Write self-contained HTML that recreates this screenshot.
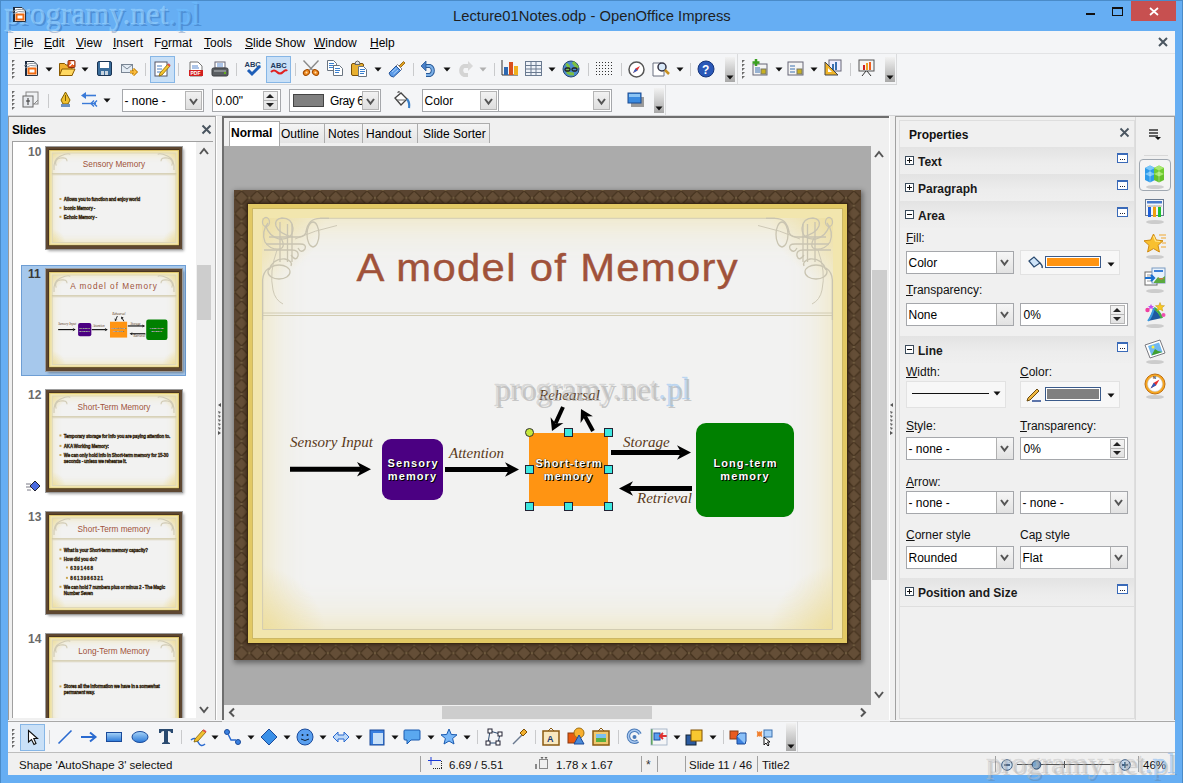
<!DOCTYPE html>
<html><head><meta charset="utf-8"><style>*{box-sizing:border-box;margin:0;padding:0}
html,body{width:1183px;height:783px;overflow:hidden;background:#66AEF3;font-family:"Liberation Sans",sans-serif;font-size:12px;color:#000;position:relative}
.a{position:absolute}
svg.a{overflow:visible}
.t{position:absolute;white-space:nowrap;line-height:1}
u{text-decoration:underline;text-underline-offset:1px}
</style></head><body>
<div class="a" style="left:0px;top:0px;width:1183px;height:783px;background:#66AEF3;border:1px solid #4A8BC8;border-bottom:none"></div>
<div class="t" style="left:453px;top:9px;font-size:14.8px;color:#1F1F1F">Lecture01Notes.odp - OpenOffice Impress</div>
<div class="a" style="left:1086px;top:13px;width:9px;height:2px;background:#111"></div>
<div class="a" style="left:1112px;top:7px;width:11px;height:9px;border:1px solid #111;border-top:2px solid #111"></div>
<div class="a" style="left:1131px;top:1px;width:45px;height:20px;background:#C75050"></div>
<svg class="a" style="left:1146px;top:5px" width="14" height="12" viewBox="0 0 14 12"><path d="M4 3L12 10M12 3L4 10" stroke="#fff" stroke-width="1.7"/></svg>
<div class="a" style="left:8px;top:31px;width:1167px;height:744px;background:#F4F5F7"></div>
<div class="t" style="left:14px;top:37px;font-size:12px;color:#000"><u>F</u>ile</div>
<div class="t" style="left:44px;top:37px;font-size:12px;color:#000"><u>E</u>dit</div>
<div class="t" style="left:76px;top:37px;font-size:12px;color:#000"><u>V</u>iew</div>
<div class="t" style="left:113px;top:37px;font-size:12px;color:#000"><u>I</u>nsert</div>
<div class="t" style="left:154px;top:37px;font-size:12px;color:#000">F<u>o</u>rmat</div>
<div class="t" style="left:204px;top:37px;font-size:12px;color:#000"><u>T</u>ools</div>
<div class="t" style="left:245px;top:37px;font-size:12px;color:#000"><u>S</u>lide Show</div>
<div class="t" style="left:314px;top:37px;font-size:12px;color:#000"><u>W</u>indow</div>
<div class="t" style="left:370px;top:37px;font-size:12px;color:#000"><u>H</u>elp</div>
<div class="a" style="left:8px;top:53px;width:1167px;height:1px;background:#E2E3E5"></div>
<svg class="a" style="left:1157px;top:36px" width="12" height="12" viewBox="0 0 12 12"><path d="M2 2L10 10M10 2L2 10" stroke="#4A5560" stroke-width="2"/></svg>
<div class="a" style="left:8px;top:84px;width:889px;height:1px;background:#D5D6D8"></div>
<div class="a" style="left:737px;top:54px;width:1px;height:30px;background:#DADBDD"></div>
<div class="a" style="left:896px;top:54px;width:1px;height:30px;background:#DADBDD"></div>
<svg class="a" style="left:12px;top:60px" width="4" height="20" viewBox="0 0 4 20"><path d="M0 0H3L0 3Z" fill="#6A6A6A"/><path d="M0 4H3L0 7Z" fill="#6A6A6A"/><path d="M0 8H3L0 11Z" fill="#6A6A6A"/><path d="M0 12H3L0 15Z" fill="#6A6A6A"/><path d="M0 16H3L0 19Z" fill="#6A6A6A"/></svg>
<svg class="a" style="left:24px;top:60px" width="15" height="17" viewBox="0 0 15 17"><path d="M1.5 1.5H10L13.5 5V15.5H1.5Z" fill="#fff" stroke="#2A3340"/><rect x="1" y="1" width="2" height="15" fill="#1A2A40"/><rect x="4.5" y="8.5" width="7" height="5" fill="#fff" stroke="#F06A10" stroke-width="2"/><path d="M0 6Q5 2 13 4M1 8Q6 4 13 6" stroke="#8A949E" fill="none" stroke-width="1"/></svg>
<svg class="a" style="left:45px;top:67px" width="8" height="5" viewBox="0 0 8 5"><path d="M0.5 0.5H7.5L4 4.5Z" fill="#111"/></svg>
<svg class="a" style="left:59px;top:60px" width="17" height="17" viewBox="0 0 17 17"><path d="M0.5 3.5H5.5L7 5H13V15.5H0.5Z" fill="#F0B030" stroke="#8A5A00"/><path d="M0.5 15.5L3 9H16L13 15.5Z" fill="#FFD860" stroke="#8A5A00"/><rect x="9" y="0.5" width="7" height="7" rx="1" fill="#E85A18" stroke="#8A3010"/><path d="M10.5 6L14.5 2M11.5 2H14.5V5" stroke="#fff" stroke-width="1.3" fill="none"/></svg>
<svg class="a" style="left:81px;top:67px" width="8" height="5" viewBox="0 0 8 5"><path d="M0.5 0.5H7.5L4 4.5Z" fill="#111"/></svg>
<svg class="a" style="left:97px;top:61px" width="15" height="15" viewBox="0 0 15 15"><rect x="0.5" y="0.5" width="14" height="14" rx="1.5" fill="#3A6C9A" stroke="#1A3454"/><rect x="3" y="1" width="9" height="6" fill="#FFFFFF"/><rect x="4" y="10" width="3" height="4" fill="#C8D4E0"/><rect x="8" y="10" width="3" height="4" fill="#C8D4E0"/></svg>
<svg class="a" style="left:120px;top:63px" width="18" height="13" viewBox="0 0 18 13"><rect x="1.5" y="1.5" width="11" height="8" fill="#E4ECF4" stroke="#7A8694"/><path d="M1.5 1.5L7 6L12.5 1.5" stroke="#7A8694" fill="none"/><path d="M10 9H15M13 6L16 9L13 12" stroke="#B87800" stroke-width="3" fill="none"/><path d="M10 9H15M13 6L16 9L13 12" stroke="#FFC040" stroke-width="1.4" fill="none"/></svg>
<div class="a" style="left:145px;top:63px;width:1px;height:13px;background:#C9CACC"></div>
<div class="a" style="left:150px;top:56px;width:25px;height:27px;background:#C9E0F7;border:1px solid #86B6E6"></div>
<svg class="a" style="left:154px;top:61px" width="17" height="16" viewBox="0 0 17 16"><rect x="1" y="1" width="12" height="14" fill="#fff" stroke="#556"/><path d="M3 5H8M3 8H8M3 11H7" stroke="#4A7FC0"/><path d="M6 12L14 3L16 5L8 14L5 15Z" fill="#F4C430" stroke="#8A6A00" stroke-width="0.8"/><path d="M14 3L16 5" stroke="#E05050" stroke-width="2"/></svg>
<div class="a" style="left:178px;top:63px;width:1px;height:13px;background:#C9CACC"></div>
<svg class="a" style="left:189px;top:61px" width="14" height="16" viewBox="0 0 14 16"><path d="M1 1H9L13 5V15H1Z" fill="#fff" stroke="#777"/><path d="M3 5H9M3 7H10" stroke="#5A8AD0"/><rect x="0" y="9" width="14" height="6" fill="#D21F1F"/><text x="1.5" y="14" font-size="5" font-family="Liberation Sans" font-weight="bold" fill="#fff">PDF</text></svg>
<svg class="a" style="left:211px;top:61px" width="18" height="16" viewBox="0 0 18 16"><rect x="4" y="1" width="10" height="6" fill="#fff" stroke="#667"/><path d="M6 3H12M6 5H12" stroke="#5A8AD0"/><rect x="1" y="7" width="16" height="8" rx="1.5" fill="#5A5E62" stroke="#3A3D40"/><rect x="3" y="9" width="12" height="2" fill="#8A8E92"/><circle cx="14" cy="12" r="1" fill="#6C0"/></svg>
<div class="a" style="left:236px;top:63px;width:1px;height:13px;background:#C9CACC"></div>
<svg class="a" style="left:244px;top:59px" width="18" height="18" viewBox="0 0 18 18"><text x="0.5" y="7.5" font-size="7.5" font-family="Liberation Sans" font-weight="bold" fill="#223A5E">ABC</text><path d="M4 11L8 15L16 7" stroke="#1E5EB8" stroke-width="3" fill="none"/></svg>
<div class="a" style="left:266px;top:56px;width:25px;height:27px;background:#C9E0F7;border:1px solid #86B6E6"></div>
<svg class="a" style="left:270px;top:60px" width="18" height="16" viewBox="0 0 18 16"><text x="0.5" y="8" font-size="7.5" font-family="Liberation Sans" font-weight="bold" fill="#223A5E">ABC</text><path d="M1 12Q4 9 7 12T13 12T17 11" stroke="#E02020" stroke-width="2" fill="none"/></svg>
<div class="a" style="left:295px;top:63px;width:1px;height:13px;background:#C9CACC"></div>
<svg class="a" style="left:302px;top:60px" width="18" height="17" viewBox="0 0 18 17"><path d="M1.5 0.5L10.5 10M16.5 0.5L7.5 10" stroke="#8A8A8A" stroke-width="1.4"/><ellipse cx="4.5" cy="12.5" rx="3.3" ry="2.6" transform="rotate(-35 4.5 12.5)" fill="#F08A20" stroke="#A04A00"/><ellipse cx="13.5" cy="12.5" rx="3.3" ry="2.6" transform="rotate(35 13.5 12.5)" fill="#F08A20" stroke="#A04A00"/><circle cx="4.5" cy="12.5" r="1" fill="#FFE0B0"/><circle cx="13.5" cy="12.5" r="1" fill="#FFE0B0"/></svg>
<svg class="a" style="left:327px;top:60px" width="17" height="16" viewBox="0 0 17 16"><path d="M0.5 0.5H6.5L9.5 3.5V10.5H0.5Z" fill="#fff" stroke="#6A7480"/><path d="M2 3.5H7M2 5.5H7M2 7.5H6" stroke="#3A80D0" stroke-width="1"/><path d="M6.5 5.5H12.5L15.5 8.5V15.5H6.5Z" fill="#fff" stroke="#6A7480"/><path d="M8 8.5H13M8 10.5H13M8 12.5H12" stroke="#3A80D0" stroke-width="1"/></svg>
<svg class="a" style="left:351px;top:60px" width="17" height="17" viewBox="0 0 17 17"><rect x="0.5" y="3.5" width="12" height="12" rx="1.5" fill="#E8B030" stroke="#7A5008"/><path d="M4 4.5Q4 1 6.5 1Q9 1 9 4.5Z" fill="#E0E0E0" stroke="#666"/><path d="M7.5 6.5H12.5L15.5 9.5V16.5H7.5Z" fill="#fff" stroke="#6A7480"/><path d="M9 9.5H14M9 11.5H14M9 13.5H13" stroke="#3A80D0" stroke-width="1"/></svg>
<svg class="a" style="left:374px;top:67px" width="8" height="5" viewBox="0 0 8 5"><path d="M0.5 0.5H7.5L4 4.5Z" fill="#111"/></svg>
<svg class="a" style="left:388px;top:60px" width="18" height="17" viewBox="0 0 18 17"><path d="M11 6L15.5 1.5L17 3L12.5 7.5Z" fill="#E0A020" stroke="#8A5A00" stroke-width="0.8"/><path d="M9.5 4.5L14 9L12.5 10.5L8 6Z" fill="#fff" stroke="#667" stroke-width="0.8"/><path d="M1 13L8 6L12.5 10.5L5.5 17Q2 17 1 13Z" fill="#5A9AE8" stroke="#1A4A90" stroke-width="0.9"/><path d="M4 12L8.5 8M5.5 14L10 10" stroke="#B8D8F8" stroke-width="0.9"/></svg>
<div class="a" style="left:413px;top:63px;width:1px;height:13px;background:#C9CACC"></div>
<svg class="a" style="left:420px;top:60px" width="18" height="17" viewBox="0 0 18 17"><path d="M4 6H10A5 5 0 0 1 10 15H6" fill="none" stroke="#2A5A98" stroke-width="4"/><path d="M4 6H10A5 5 0 0 1 10 15H6" fill="none" stroke="#7BB0E8" stroke-width="2"/><path d="M1 6L6 1V11Z" fill="#4A80C8" stroke="#2A5A98" stroke-width="0.8"/></svg>
<svg class="a" style="left:443px;top:67px" width="8" height="5" viewBox="0 0 8 5"><path d="M0.5 0.5H7.5L4 4.5Z" fill="#111"/></svg>
<svg class="a" style="left:456px;top:60px" width="18" height="17" viewBox="0 0 18 17"><path d="M14 6H8A5 5 0 0 0 8 15H12" fill="none" stroke="#D4D4D4" stroke-width="4"/><path d="M17 6L12 1V11Z" fill="#D8D8D8"/></svg>
<svg class="a" style="left:479px;top:67px" width="8" height="5" viewBox="0 0 8 5"><path d="M0.5 0.5H7.5L4 4.5Z" fill="#B0B0B0"/></svg>
<div class="a" style="left:494px;top:63px;width:1px;height:13px;background:#C9CACC"></div>
<svg class="a" style="left:501px;top:59px" width="18" height="18" viewBox="0 0 18 18"><path d="M1 1V16H17" stroke="#333" fill="none"/><rect x="3" y="8" width="4" height="8" fill="#2E68B0"/><rect x="8" y="3" width="4" height="13" fill="#D9501E"/><rect x="13" y="7" width="4" height="9" fill="#F0B020"/></svg>
<svg class="a" style="left:525px;top:61px" width="18" height="15" viewBox="0 0 18 15"><rect x="0.5" y="0.5" width="16" height="14" fill="#EEF2F8" stroke="#6A7A90"/><path d="M0.5 4.5H16.5M0.5 8H16.5M0.5 11.5H16.5M6 0.5V14.5M11 0.5V14.5" stroke="#6A7A90"/></svg>
<svg class="a" style="left:548px;top:67px" width="8" height="5" viewBox="0 0 8 5"><path d="M0.5 0.5H7.5L4 4.5Z" fill="#111"/></svg>
<svg class="a" style="left:562px;top:60px" width="18" height="18" viewBox="0 0 18 18"><circle cx="9" cy="9" r="8" fill="#4A8AD0" stroke="#2A4A70"/><path d="M4 4Q8 6 6 10T12 14M11 2Q14 6 16 8" stroke="#7CC040" stroke-width="3" fill="none"/><rect x="3" y="8" width="5" height="3" rx="1.5" fill="none" stroke="#222" stroke-width="1.3"/><rect x="10" y="8" width="5" height="3" rx="1.5" fill="none" stroke="#222" stroke-width="1.3"/></svg>
<div class="a" style="left:588px;top:63px;width:1px;height:13px;background:#C9CACC"></div>
<svg class="a" style="left:596px;top:62px" width="17" height="14" viewBox="0 0 17 14"><rect x="0" y="0" width="1" height="1" fill="#333"/><rect x="0" y="3" width="1" height="1" fill="#333"/><rect x="0" y="6" width="1" height="1" fill="#333"/><rect x="0" y="9" width="1" height="1" fill="#333"/><rect x="0" y="12" width="1" height="1" fill="#333"/><rect x="3" y="0" width="1" height="1" fill="#333"/><rect x="3" y="3" width="1" height="1" fill="#333"/><rect x="3" y="6" width="1" height="1" fill="#333"/><rect x="3" y="9" width="1" height="1" fill="#333"/><rect x="3" y="12" width="1" height="1" fill="#333"/><rect x="6" y="0" width="1" height="1" fill="#333"/><rect x="6" y="3" width="1" height="1" fill="#333"/><rect x="6" y="6" width="1" height="1" fill="#333"/><rect x="6" y="9" width="1" height="1" fill="#333"/><rect x="6" y="12" width="1" height="1" fill="#333"/><rect x="9" y="0" width="1" height="1" fill="#333"/><rect x="9" y="3" width="1" height="1" fill="#333"/><rect x="9" y="6" width="1" height="1" fill="#333"/><rect x="9" y="9" width="1" height="1" fill="#333"/><rect x="9" y="12" width="1" height="1" fill="#333"/><rect x="12" y="0" width="1" height="1" fill="#333"/><rect x="12" y="3" width="1" height="1" fill="#333"/><rect x="12" y="6" width="1" height="1" fill="#333"/><rect x="12" y="9" width="1" height="1" fill="#333"/><rect x="12" y="12" width="1" height="1" fill="#333"/><rect x="15" y="0" width="1" height="1" fill="#333"/><rect x="15" y="3" width="1" height="1" fill="#333"/><rect x="15" y="6" width="1" height="1" fill="#333"/><rect x="15" y="9" width="1" height="1" fill="#333"/><rect x="15" y="12" width="1" height="1" fill="#333"/></svg>
<div class="a" style="left:621px;top:63px;width:1px;height:13px;background:#C9CACC"></div>
<svg class="a" style="left:628px;top:61px" width="17" height="17" viewBox="0 0 17 17"><circle cx="8.5" cy="8.5" r="7.5" fill="#fff" stroke="#555" stroke-width="1.5"/><path d="M12 5L9.5 9.5L5 12L7.5 7.5Z" fill="#E03030"/><path d="M5 12L7.5 7.5L9.5 9.5Z" fill="#3060C0"/></svg>
<svg class="a" style="left:652px;top:60px" width="18" height="18" viewBox="0 0 18 18"><path d="M1 3H9L12 6V16H1Z" fill="#fff" stroke="#6A7080"/><circle cx="10" cy="7" r="4" fill="#D8E8F8" stroke="#334" stroke-width="1.5"/><path d="M13 10L17 14" stroke="#C89020" stroke-width="2.5"/></svg>
<svg class="a" style="left:676px;top:67px" width="8" height="5" viewBox="0 0 8 5"><path d="M0.5 0.5H7.5L4 4.5Z" fill="#111"/></svg>
<div class="a" style="left:690px;top:63px;width:1px;height:13px;background:#C9CACC"></div>
<svg class="a" style="left:697px;top:60px" width="18" height="18" viewBox="0 0 18 18"><circle cx="9" cy="9" r="8" fill="#2A58B8" stroke="#16357A"/><text x="5" y="14" font-size="12" font-weight="bold" font-family="Liberation Sans" fill="#fff">?</text></svg>
<div class="a" style="left:725px;top:57px;width:10px;height:25px;background:linear-gradient(#F2F2F2,#A8A8A8)"></div>
<svg class="a" style="left:726px;top:75px" width="8" height="5" viewBox="0 0 8 5"><path d="M0.5 0.5H7.5L4 4.5Z" fill="#111"/></svg>
<svg class="a" style="left:742px;top:60px" width="4" height="20" viewBox="0 0 4 20"><path d="M0 0H3L0 3Z" fill="#6A6A6A"/><path d="M0 4H3L0 7Z" fill="#6A6A6A"/><path d="M0 8H3L0 11Z" fill="#6A6A6A"/><path d="M0 12H3L0 15Z" fill="#6A6A6A"/><path d="M0 16H3L0 19Z" fill="#6A6A6A"/></svg>
<svg class="a" style="left:751px;top:59px" width="18" height="18" viewBox="0 0 18 18"><rect x="2" y="5" width="14" height="11" fill="#F4F4F4" stroke="#667"/><path d="M4 9H9M4 11H9M4 13H9" stroke="#3A70B0"/><rect x="10" y="10" width="5" height="5" fill="#C8B020" stroke="#776"/><path d="M5 0V7M1.5 3.5H8.5" stroke="#3AA020" stroke-width="2.5"/></svg>
<svg class="a" style="left:775px;top:67px" width="8" height="5" viewBox="0 0 8 5"><path d="M0.5 0.5H7.5L4 4.5Z" fill="#111"/></svg>
<svg class="a" style="left:787px;top:61px" width="18" height="16" viewBox="0 0 18 16"><rect x="1" y="1" width="15" height="13" fill="#F4F4F4" stroke="#667"/><path d="M3 5H8M3 8H8M3 11H8" stroke="#3A70B0"/><rect x="10" y="8" width="5" height="5" fill="#C8B020" stroke="#776"/></svg>
<svg class="a" style="left:810px;top:67px" width="8" height="5" viewBox="0 0 8 5"><path d="M0.5 0.5H7.5L4 4.5Z" fill="#111"/></svg>
<svg class="a" style="left:824px;top:59px" width="18" height="18" viewBox="0 0 18 18"><rect x="5" y="1" width="12" height="11" fill="#EEF" stroke="#667"/><rect x="8" y="5" width="2" height="6" fill="#3A70B0"/><rect x="11" y="3" width="2" height="8" fill="#3A70B0"/><path d="M1 16L1 3L14 16Z" fill="#F0B428" stroke="#444"/><path d="M4 13L4 9L8 13Z" fill="#fff"/></svg>
<div class="a" style="left:850px;top:63px;width:1px;height:13px;background:#C9CACC"></div>
<svg class="a" style="left:858px;top:59px" width="17" height="18" viewBox="0 0 17 18"><rect x="1" y="1" width="15" height="11" fill="#F4F4F4" stroke="#555"/><rect x="5" y="6" width="2" height="5" fill="#D02020"/><rect x="8" y="4" width="2" height="7" fill="#F0A020"/><rect x="11" y="3" width="2" height="8" fill="#F06020"/><path d="M8 12L4 17M9 12L13 17" stroke="#333"/></svg>
<div class="a" style="left:885px;top:57px;width:10px;height:25px;background:linear-gradient(#F2F2F2,#A8A8A8)"></div>
<svg class="a" style="left:886px;top:75px" width="8" height="5" viewBox="0 0 8 5"><path d="M0.5 0.5H7.5L4 4.5Z" fill="#111"/></svg>
<div class="a" style="left:8px;top:115px;width:1167px;height:1px;background:#D5D6D8"></div>
<div class="a" style="left:665px;top:85px;width:1px;height:30px;background:#DADBDD"></div>
<svg class="a" style="left:12px;top:91px" width="4" height="20" viewBox="0 0 4 20"><path d="M0 0H3L0 3Z" fill="#6A6A6A"/><path d="M0 4H3L0 7Z" fill="#6A6A6A"/><path d="M0 8H3L0 11Z" fill="#6A6A6A"/><path d="M0 12H3L0 15Z" fill="#6A6A6A"/><path d="M0 16H3L0 19Z" fill="#6A6A6A"/></svg>
<svg class="a" style="left:22px;top:91px" width="17" height="17" viewBox="0 0 17 17"><rect x="4" y="1" width="12" height="12" fill="#F0F2F4" stroke="#888"/><rect x="1" y="5" width="10" height="11" fill="#E8EAEE" stroke="#666"/><path d="M6 7V14M4 10H8" stroke="#333"/><path d="M12 13L16 9" stroke="#888"/></svg>
<div class="a" style="left:48px;top:94px;width:1px;height:14px;background:#C9CACC"></div>
<svg class="a" style="left:59px;top:91px" width="13" height="17" viewBox="0 0 13 17"><path d="M6.5 1L11 9L9 13H4L2 9Z" fill="#F0C030" stroke="#806000"/><path d="M6.5 4V10" stroke="#806000"/><rect x="2" y="13" width="9" height="3" fill="#6A90C0"/></svg>
<svg class="a" style="left:80px;top:92px" width="18" height="15" viewBox="0 0 18 15"><path d="M4 3.5H16" stroke="#3A7AD8" stroke-width="1.6"/><path d="M1 3.5L6 0V7Z" fill="#3A7AD8"/><path d="M2 11.5H16" stroke="#3A7AD8" stroke-width="1.4"/><path d="M14 8.5L11 11.5L14 14.5M17 8.5L14 11.5L17 14.5" stroke="#3A7AD8" stroke-width="1.4" fill="none"/></svg>
<svg class="a" style="left:103px;top:98px" width="8" height="5" viewBox="0 0 8 5"><path d="M0.5 0.5H7.5L4 4.5Z" fill="#111"/></svg>
<div class="a" style="left:122px;top:89px;width:82px;height:23px;background:#fff;border:1px solid #A5A7AB"></div>
<div class="t" style="left:124.5px;top:95px;font-size:12px;">- none -</div>
<div class="a" style="left:185px;top:91px;width:17px;height:19px;background:linear-gradient(#F2F2F2,#DEDEDE);border:1px solid #B5B5B5"></div>
<svg class="a" style="left:188.5px;top:97.5px" width="9" height="6.5" viewBox="0 0 9 6.5"><path d="M1 1L4.5 5.5L8 1" fill="none" stroke="#555" stroke-width="2"/></svg>
<div class="a" style="left:212px;top:89px;width:69px;height:23px;background:#fff;border:1px solid #A5A7AB"></div>
<div class="a" style="left:263px;top:91px;width:15px;height:19px;background:linear-gradient(#F4F4F4,#E2E2E2);border:1px solid #B5B5B5"></div>
<div class="a" style="left:264px;top:100px;width:13px;height:1px;background:#B5B5B5"></div>
<svg class="a" style="left:266px;top:94px" width="8" height="4" viewBox="0 0 8 4"><path d="M0 4L4 0L8 4Z" fill="#222"/></svg>
<svg class="a" style="left:266px;top:103px" width="8" height="4" viewBox="0 0 8 4"><path d="M0 0L8 0L4 4Z" fill="#222"/></svg>
<div class="t" style="left:215.5px;top:95px;font-size:12px">0.00&quot;</div>
<div class="a" style="left:289px;top:89px;width:92px;height:23px;background:#fff;border:1px solid #A5A7AB"></div>
<div class="a" style="left:293px;top:94px;width:31px;height:13px;background:#808080;border:1px solid #444"></div>
<div class="t" style="left:330px;top:95px;font-size:12px;letter-spacing:-0.4px">Gray 6</div>
<div class="a" style="left:362px;top:91px;width:17px;height:19px;background:linear-gradient(#F2F2F2,#DEDEDE);border:1px solid #B5B5B5"></div>
<svg class="a" style="left:365.5px;top:97.5px" width="9" height="6.5" viewBox="0 0 9 6.5"><path d="M1 1L4.5 5.5L8 1" fill="none" stroke="#555" stroke-width="2"/></svg>
<svg class="a" style="left:392px;top:91px" width="18" height="18" viewBox="0 0 18 18"><path d="M3 7L9 2L15 8L9 14Z" fill="#fff" stroke="#444" stroke-width="1.3"/><path d="M5 9H13" stroke="#666"/><path d="M15 8Q18 12 17 17" stroke="#3A80C8" stroke-width="2.2" fill="none"/><path d="M6 2Q5 0 8 1" stroke="#444" fill="none"/></svg>
<div class="a" style="left:422px;top:89px;width:77px;height:23px;background:#fff;border:1px solid #A5A7AB"></div>
<div class="t" style="left:424.5px;top:95px;font-size:12px;">Color</div>
<div class="a" style="left:480px;top:91px;width:17px;height:19px;background:linear-gradient(#F2F2F2,#DEDEDE);border:1px solid #B5B5B5"></div>
<svg class="a" style="left:483.5px;top:97.5px" width="9" height="6.5" viewBox="0 0 9 6.5"><path d="M1 1L4.5 5.5L8 1" fill="none" stroke="#555" stroke-width="2"/></svg>
<div class="a" style="left:498px;top:89px;width:114px;height:23px;background:#fff;border:1px solid #A5A7AB"></div>
<div class="a" style="left:593px;top:91px;width:17px;height:19px;background:linear-gradient(#F2F2F2,#DEDEDE);border:1px solid #B5B5B5"></div>
<svg class="a" style="left:596.5px;top:97.5px" width="9" height="6.5" viewBox="0 0 9 6.5"><path d="M1 1L4.5 5.5L8 1" fill="none" stroke="#555" stroke-width="2"/></svg>
<svg class="a" style="left:627px;top:92px" width="18" height="16" viewBox="0 0 18 16"><rect x="4" y="5" width="13" height="10" fill="#9A9A9A"/><rect x="1" y="1" width="13" height="10" fill="#3A8AE0" stroke="#1A4A90"/><rect x="2" y="2" width="11" height="3" fill="#8CC4F4"/></svg>
<div class="a" style="left:654px;top:88px;width:10px;height:25px;background:linear-gradient(#F2F2F2,#A8A8A8)"></div>
<svg class="a" style="left:655px;top:106px" width="8" height="5" viewBox="0 0 8 5"><path d="M0.5 0.5H7.5L4 4.5Z" fill="#111"/></svg>
<div class="a" style="left:8px;top:116px;width:208px;height:605px;background:#F0F0F0;border-left:1px solid #9A9A9A;border-top:1px solid #9A9A9A;border-right:1px solid #B0B0B0"></div>
<div class="t" style="left:12px;top:124px;font-size:12px;font-weight:bold;letter-spacing:-0.3px">Slides</div>
<svg class="a" style="left:201px;top:124px" width="11" height="11" viewBox="0 0 11 11"><path d="M1.5 1.5L9.5 9.5M9.5 1.5L1.5 9.5" stroke="#4A5560" stroke-width="2"/></svg>
<div class="a" style="left:12px;top:141px;width:201px;height:579px;background:#fff;border-top:1px solid #A0A0A0;border-left:1px solid #A0A0A0"></div>
<div class="a" style="left:196px;top:142px;width:17px;height:578px;background:#F0F0F0"></div>
<div class="a" style="left:197px;top:265px;width:14px;height:55px;background:#CDCDCD"></div>
<svg class="a" style="left:199px;top:148px" width="10" height="7" viewBox="0 0 10 7"><path d="M1 6L5.0 1L9 6" fill="none" stroke="#555" stroke-width="2"/></svg>
<svg class="a" style="left:199px;top:706px" width="10" height="7" viewBox="0 0 10 7"><path d="M1 1L5.0 6L9 1" fill="none" stroke="#555" stroke-width="2"/></svg>
<div class="a" style="left:21px;top:265px;width:165px;height:111px;background:#A6C8EC;border:1px solid #6E9ED4"></div>
<div class="t" style="left:28px;top:146px;font-size:12px;font-weight:bold;color:#6A6A6A">10</div>
<div class="t" style="left:28px;top:268px;font-size:12px;font-weight:bold;color:#3A3A3A">11</div>
<div class="t" style="left:28px;top:389px;font-size:12px;font-weight:bold;color:#6A6A6A">12</div>
<div class="t" style="left:28px;top:511px;font-size:12px;font-weight:bold;color:#6A6A6A">13</div>
<div class="t" style="left:28px;top:633px;font-size:12px;font-weight:bold;color:#6A6A6A">14</div>
<div class="a" style="left:46px;top:147px;width:627px;height:470px;transform:scale(0.21691,0.21702);transform-origin:0 0;box-shadow:0 0 0 4px #A8A8A8, 8px 8px 12px rgba(0,0,0,.35)">
<div class="a" style="left:0px;top:0px;width:627px;height:470px;background:#5E4731"></div>
<div class="a" style="left:14px;top:14px;width:599px;height:439px;background:#E2C964;box-shadow:0 0 0 1px #3A2814, 0 0 3px 2px rgba(35,22,10,.55)"></div>
<div class="a" style="left:18px;top:18px;width:591px;height:431px;background:radial-gradient(circle at 0 0,rgba(232,205,100,.6),rgba(232,205,100,0) 75px),radial-gradient(circle at 100% 0,rgba(232,205,100,.6),rgba(232,205,100,0) 75px),radial-gradient(circle at 0 100%,rgba(232,205,100,.6),rgba(232,205,100,0) 75px),radial-gradient(circle at 100% 100%,rgba(232,205,100,.6),rgba(232,205,100,0) 75px),#F2F2F1;box-shadow:inset 0 0 0 1px #CDB865, inset 0 0 0 10px #F2E6AE, inset 0 0 44px 6px rgba(238,222,150,.85)"></div>
<div class="a" style="left:27px;top:26px;width:574px;height:416px;border:4px solid #DCD6BC"></div>
<div class="a" style="left:27px;top:121px;width:574px;height:9px;border-top:4px solid #CFC7A6;border-bottom:4px solid #D8D1B5"></div>
<svg class="a" style="left:27px;top:26px" width="90" height="90" viewBox="0 0 90 90"><path d="M10 80Q5 30 40 15T85 8M20 60Q10 30 40 25T70 40" fill="none" stroke="#D0CAB4" stroke-width="5"/></svg>
<svg class="a" style="left:510px;top:26px" width="90" height="90"><g transform="translate(90,0) scale(-1,1)"><path d="M10 80Q5 30 40 15T85 8M20 60Q10 30 40 25T70 40" fill="none" stroke="#D0CAB4" stroke-width="5"/></g></svg>
<div class="t" style="left:0;width:627px;text-align:center;top:59px;font-size:38px;color:#A0523A;letter-spacing:0px">Sensory Memory</div>
<div class="a" style="left:62px;top:235px;width:9px;height:9px;background:#C9A44C"></div>
<div class="t" style="left:82px;top:227px;font-size:24px;font-weight:bold;color:#2E1C08;line-height:27px;letter-spacing:-1px;-webkit-text-stroke:1.4px #2E1C08;transform:scaleX(0.86);transform-origin:0 0">Allows you to function and enjoy world</div>
<div class="a" style="left:62px;top:276px;width:9px;height:9px;background:#C9A44C"></div>
<div class="t" style="left:82px;top:268px;font-size:24px;font-weight:bold;color:#2E1C08;line-height:27px;letter-spacing:-1px;-webkit-text-stroke:1.4px #2E1C08;transform:scaleX(0.86);transform-origin:0 0">Iconic Memory -</div>
<div class="a" style="left:62px;top:317px;width:9px;height:9px;background:#C9A44C"></div>
<div class="t" style="left:82px;top:309px;font-size:24px;font-weight:bold;color:#2E1C08;line-height:27px;letter-spacing:-1px;-webkit-text-stroke:1.4px #2E1C08;transform:scaleX(0.86);transform-origin:0 0">Echoic Memory -</div>
</div>
<div class="a" style="left:45px;top:146px;width:138px;height:104px;border:1px solid #9C9C9C"></div>
<div class="a" style="left:46px;top:269px;width:627px;height:470px;transform:scale(0.21691,0.21702);transform-origin:0 0;box-shadow:0 0 0 4px #A8A8A8, 8px 8px 12px rgba(0,0,0,.35)">
<div class="a" style="left:0px;top:0px;width:627px;height:470px;background:#5E4731"></div>
<div class="a" style="left:14px;top:14px;width:599px;height:439px;background:#E2C964;box-shadow:0 0 0 1px #3A2814, 0 0 3px 2px rgba(35,22,10,.55)"></div>
<div class="a" style="left:18px;top:18px;width:591px;height:431px;background:radial-gradient(circle at 0 0,rgba(232,205,100,.6),rgba(232,205,100,0) 75px),radial-gradient(circle at 100% 0,rgba(232,205,100,.6),rgba(232,205,100,0) 75px),radial-gradient(circle at 0 100%,rgba(232,205,100,.6),rgba(232,205,100,0) 75px),radial-gradient(circle at 100% 100%,rgba(232,205,100,.6),rgba(232,205,100,0) 75px),#F2F2F1;box-shadow:inset 0 0 0 1px #CDB865, inset 0 0 0 10px #F2E6AE, inset 0 0 44px 6px rgba(238,222,150,.85)"></div>
<div class="a" style="left:27px;top:26px;width:574px;height:416px;border:4px solid #DCD6BC"></div>
<div class="a" style="left:27px;top:121px;width:574px;height:9px;border-top:4px solid #CFC7A6;border-bottom:4px solid #D8D1B5"></div>
<svg class="a" style="left:27px;top:26px" width="90" height="90" viewBox="0 0 90 90"><path d="M10 80Q5 30 40 15T85 8M20 60Q10 30 40 25T70 40" fill="none" stroke="#D0CAB4" stroke-width="5"/></svg>
<svg class="a" style="left:510px;top:26px" width="90" height="90"><g transform="translate(90,0) scale(-1,1)"><path d="M10 80Q5 30 40 15T85 8M20 60Q10 30 40 25T70 40" fill="none" stroke="#D0CAB4" stroke-width="5"/></g></svg>
<div class="t" style="left:0;width:627px;text-align:center;top:59px;font-size:38px;color:#A0523A;letter-spacing:4.5px">A model of Memory</div>
<div class="t" style="left:56px;top:245px;font-family:'Liberation Serif',serif;font-style:italic;font-size:15px;color:#5A3A1A">Sensory Input</div>
<div class="t" style="left:215px;top:256px;font-family:'Liberation Serif',serif;font-style:italic;font-size:15px;color:#5A3A1A">Attention</div>
<div class="t" style="left:305px;top:198px;font-family:'Liberation Serif',serif;font-style:italic;font-size:15px;color:#5A3A1A">Rehearsal</div>
<div class="t" style="left:389px;top:245px;font-family:'Liberation Serif',serif;font-style:italic;font-size:15px;color:#5A3A1A">Storage</div>
<div class="t" style="left:403px;top:301px;font-family:'Liberation Serif',serif;font-style:italic;font-size:15px;color:#5A3A1A">Retrieval</div>
<svg class="a" style="left:-234px;top:-190px" width="1183" height="783"><line x1="290" y1="469.3" x2="361.2" y2="469.3" stroke="#000" stroke-width="5"/><polygon points="371.0,469.3 357.0,476.5 361.2,469.3 357.0,462.1" fill="#000"/><line x1="445" y1="469.5" x2="509.2" y2="469.5" stroke="#000" stroke-width="5"/><polygon points="519.0,469.5 505.0,476.7 509.2,469.5 505.0,462.3" fill="#000"/><line x1="611" y1="452.5" x2="681.2" y2="452.5" stroke="#000" stroke-width="5"/><polygon points="691.0,452.5 677.0,459.7 681.2,452.5 677.0,445.3" fill="#000"/><line x1="692" y1="488.5" x2="628.8" y2="488.5" stroke="#000" stroke-width="5"/><polygon points="619.0,488.5 633.0,481.3 628.8,488.5 633.0,495.7" fill="#000"/><line x1="563" y1="407" x2="555.5" y2="423.4" stroke="#000" stroke-width="4"/><polygon points="552.0,431.0 550.6,417.2 555.5,423.4 563.4,423.0" fill="#000"/><line x1="593" y1="431" x2="585.0" y2="416.4" stroke="#000" stroke-width="4"/><polygon points="581.0,409.0 592.9,416.2 585.0,416.4 580.6,422.9" fill="#000"/></svg>
<div class="a" style="left:148px;top:249px;width:61px;height:61px;background:#4B0082;border-radius:9px"></div>
<div class="t" style="left:148px;top:267px;width:61px;font-size:11px;font-weight:bold;color:#fff;letter-spacing:1.1px;text-indent:1.1px;text-align:center;line-height:13px;text-shadow:1px 1px 0 #000,0 0 1px #000">Sensory<br>memory</div>
<div class="a" style="left:295px;top:243px;width:79px;height:73px;background:#FF9412"></div>
<div class="t" style="left:295px;top:267px;width:79px;font-size:11px;font-weight:bold;color:#fff;letter-spacing:1.1px;text-indent:1.1px;text-align:center;line-height:13px;text-shadow:1px 1px 0 #000,0 0 1px #000">Short-term<br>memory</div>
<div class="a" style="left:462px;top:233px;width:98px;height:94px;background:#008000;border-radius:10px"></div>
<div class="t" style="left:462px;top:267px;width:98px;font-size:11px;font-weight:bold;color:#fff;letter-spacing:1.1px;text-indent:1.1px;text-align:center;line-height:13px;text-shadow:1px 1px 0 #000,0 0 1px #000">Long-term<br>memory</div>
</div>
<div class="a" style="left:45px;top:268px;width:138px;height:104px;border:1px solid #9C9C9C"></div>
<div class="a" style="left:46px;top:390px;width:627px;height:470px;transform:scale(0.21691,0.21702);transform-origin:0 0;box-shadow:0 0 0 4px #A8A8A8, 8px 8px 12px rgba(0,0,0,.35)">
<div class="a" style="left:0px;top:0px;width:627px;height:470px;background:#5E4731"></div>
<div class="a" style="left:14px;top:14px;width:599px;height:439px;background:#E2C964;box-shadow:0 0 0 1px #3A2814, 0 0 3px 2px rgba(35,22,10,.55)"></div>
<div class="a" style="left:18px;top:18px;width:591px;height:431px;background:radial-gradient(circle at 0 0,rgba(232,205,100,.6),rgba(232,205,100,0) 75px),radial-gradient(circle at 100% 0,rgba(232,205,100,.6),rgba(232,205,100,0) 75px),radial-gradient(circle at 0 100%,rgba(232,205,100,.6),rgba(232,205,100,0) 75px),radial-gradient(circle at 100% 100%,rgba(232,205,100,.6),rgba(232,205,100,0) 75px),#F2F2F1;box-shadow:inset 0 0 0 1px #CDB865, inset 0 0 0 10px #F2E6AE, inset 0 0 44px 6px rgba(238,222,150,.85)"></div>
<div class="a" style="left:27px;top:26px;width:574px;height:416px;border:4px solid #DCD6BC"></div>
<div class="a" style="left:27px;top:121px;width:574px;height:9px;border-top:4px solid #CFC7A6;border-bottom:4px solid #D8D1B5"></div>
<svg class="a" style="left:27px;top:26px" width="90" height="90" viewBox="0 0 90 90"><path d="M10 80Q5 30 40 15T85 8M20 60Q10 30 40 25T70 40" fill="none" stroke="#D0CAB4" stroke-width="5"/></svg>
<svg class="a" style="left:510px;top:26px" width="90" height="90"><g transform="translate(90,0) scale(-1,1)"><path d="M10 80Q5 30 40 15T85 8M20 60Q10 30 40 25T70 40" fill="none" stroke="#D0CAB4" stroke-width="5"/></g></svg>
<div class="t" style="left:0;width:627px;text-align:center;top:59px;font-size:38px;color:#A0523A;letter-spacing:0px">Short-Term Memory</div>
<div class="a" style="left:62px;top:205px;width:9px;height:9px;background:#C9A44C"></div>
<div class="t" style="left:82px;top:197px;font-size:24px;font-weight:bold;color:#2E1C08;line-height:27px;letter-spacing:-1px;-webkit-text-stroke:1.4px #2E1C08;transform:scaleX(0.86);transform-origin:0 0">Temporary storage for info you are paying attention to.</div>
<div class="a" style="left:62px;top:253px;width:9px;height:9px;background:#C9A44C"></div>
<div class="t" style="left:82px;top:245px;font-size:24px;font-weight:bold;color:#2E1C08;line-height:27px;letter-spacing:-1px;-webkit-text-stroke:1.4px #2E1C08;transform:scaleX(0.86);transform-origin:0 0">AKA Working Memory:</div>
<div class="a" style="left:62px;top:295px;width:9px;height:9px;background:#C9A44C"></div>
<div class="t" style="left:82px;top:287px;font-size:24px;font-weight:bold;color:#2E1C08;line-height:27px;letter-spacing:-1px;-webkit-text-stroke:1.4px #2E1C08;transform:scaleX(0.86);transform-origin:0 0">We can only hold info in Short-term memory for 15-30</div>
<div class="t" style="left:82px;top:314px;font-size:24px;font-weight:bold;color:#2E1C08;line-height:27px;letter-spacing:-1px;-webkit-text-stroke:1.4px #2E1C08;transform:scaleX(0.86);transform-origin:0 0">seconds - unless we rehearse it.</div>
</div>
<div class="a" style="left:45px;top:389px;width:138px;height:104px;border:1px solid #9C9C9C"></div>
<div class="a" style="left:46px;top:512px;width:627px;height:470px;transform:scale(0.21691,0.21702);transform-origin:0 0;box-shadow:0 0 0 4px #A8A8A8, 8px 8px 12px rgba(0,0,0,.35)">
<div class="a" style="left:0px;top:0px;width:627px;height:470px;background:#5E4731"></div>
<div class="a" style="left:14px;top:14px;width:599px;height:439px;background:#E2C964;box-shadow:0 0 0 1px #3A2814, 0 0 3px 2px rgba(35,22,10,.55)"></div>
<div class="a" style="left:18px;top:18px;width:591px;height:431px;background:radial-gradient(circle at 0 0,rgba(232,205,100,.6),rgba(232,205,100,0) 75px),radial-gradient(circle at 100% 0,rgba(232,205,100,.6),rgba(232,205,100,0) 75px),radial-gradient(circle at 0 100%,rgba(232,205,100,.6),rgba(232,205,100,0) 75px),radial-gradient(circle at 100% 100%,rgba(232,205,100,.6),rgba(232,205,100,0) 75px),#F2F2F1;box-shadow:inset 0 0 0 1px #CDB865, inset 0 0 0 10px #F2E6AE, inset 0 0 44px 6px rgba(238,222,150,.85)"></div>
<div class="a" style="left:27px;top:26px;width:574px;height:416px;border:4px solid #DCD6BC"></div>
<div class="a" style="left:27px;top:121px;width:574px;height:9px;border-top:4px solid #CFC7A6;border-bottom:4px solid #D8D1B5"></div>
<svg class="a" style="left:27px;top:26px" width="90" height="90" viewBox="0 0 90 90"><path d="M10 80Q5 30 40 15T85 8M20 60Q10 30 40 25T70 40" fill="none" stroke="#D0CAB4" stroke-width="5"/></svg>
<svg class="a" style="left:510px;top:26px" width="90" height="90"><g transform="translate(90,0) scale(-1,1)"><path d="M10 80Q5 30 40 15T85 8M20 60Q10 30 40 25T70 40" fill="none" stroke="#D0CAB4" stroke-width="5"/></g></svg>
<div class="t" style="left:0;width:627px;text-align:center;top:59px;font-size:38px;color:#A0523A;letter-spacing:0px">Short-Term memory</div>
<div class="a" style="left:62px;top:169px;width:9px;height:9px;background:#C9A44C"></div>
<div class="t" style="left:82px;top:161px;font-size:24px;font-weight:bold;color:#2E1C08;line-height:27px;letter-spacing:-1px;-webkit-text-stroke:1.4px #2E1C08;transform:scaleX(0.86);transform-origin:0 0">What is your Short-term memory capacity?</div>
<div class="a" style="left:62px;top:210px;width:9px;height:9px;background:#C9A44C"></div>
<div class="t" style="left:82px;top:202px;font-size:24px;font-weight:bold;color:#2E1C08;line-height:27px;letter-spacing:-1px;-webkit-text-stroke:1.4px #2E1C08;transform:scaleX(0.86);transform-origin:0 0">How did you do?</div>
<div class="a" style="left:92px;top:251px;width:9px;height:9px;background:#C9A44C"></div>
<div class="t" style="left:112px;top:243px;font-size:24px;font-weight:bold;color:#2E1C08;line-height:27px;letter-spacing:-1px;-webkit-text-stroke:1.4px #2E1C08;transform:scaleX(0.86);transform-origin:0 0">6 3 9 1 4 6 8</div>
<div class="a" style="left:92px;top:299px;width:9px;height:9px;background:#C9A44C"></div>
<div class="t" style="left:112px;top:291px;font-size:24px;font-weight:bold;color:#2E1C08;line-height:27px;letter-spacing:-1px;-webkit-text-stroke:1.4px #2E1C08;transform:scaleX(0.86);transform-origin:0 0">8 6 1 3 9 8 6 3 2 1</div>
<div class="a" style="left:62px;top:340px;width:9px;height:9px;background:#C9A44C"></div>
<div class="t" style="left:82px;top:332px;font-size:24px;font-weight:bold;color:#2E1C08;line-height:27px;letter-spacing:-1px;-webkit-text-stroke:1.4px #2E1C08;transform:scaleX(0.86);transform-origin:0 0">We can hold 7 numbers plus or minus 2 - The Magic</div>
<div class="t" style="left:82px;top:359px;font-size:24px;font-weight:bold;color:#2E1C08;line-height:27px;letter-spacing:-1px;-webkit-text-stroke:1.4px #2E1C08;transform:scaleX(0.86);transform-origin:0 0">Number Seven</div>
</div>
<div class="a" style="left:45px;top:511px;width:138px;height:104px;border:1px solid #9C9C9C"></div>
<div class="a" style="left:46px;top:634px;width:627px;height:470px;transform:scale(0.21691,0.21702);transform-origin:0 0;box-shadow:0 0 0 4px #A8A8A8, 8px 8px 12px rgba(0,0,0,.35)">
<div class="a" style="left:0px;top:0px;width:627px;height:470px;background:#5E4731"></div>
<div class="a" style="left:14px;top:14px;width:599px;height:439px;background:#E2C964;box-shadow:0 0 0 1px #3A2814, 0 0 3px 2px rgba(35,22,10,.55)"></div>
<div class="a" style="left:18px;top:18px;width:591px;height:431px;background:radial-gradient(circle at 0 0,rgba(232,205,100,.6),rgba(232,205,100,0) 75px),radial-gradient(circle at 100% 0,rgba(232,205,100,.6),rgba(232,205,100,0) 75px),radial-gradient(circle at 0 100%,rgba(232,205,100,.6),rgba(232,205,100,0) 75px),radial-gradient(circle at 100% 100%,rgba(232,205,100,.6),rgba(232,205,100,0) 75px),#F2F2F1;box-shadow:inset 0 0 0 1px #CDB865, inset 0 0 0 10px #F2E6AE, inset 0 0 44px 6px rgba(238,222,150,.85)"></div>
<div class="a" style="left:27px;top:26px;width:574px;height:416px;border:4px solid #DCD6BC"></div>
<div class="a" style="left:27px;top:121px;width:574px;height:9px;border-top:4px solid #CFC7A6;border-bottom:4px solid #D8D1B5"></div>
<svg class="a" style="left:27px;top:26px" width="90" height="90" viewBox="0 0 90 90"><path d="M10 80Q5 30 40 15T85 8M20 60Q10 30 40 25T70 40" fill="none" stroke="#D0CAB4" stroke-width="5"/></svg>
<svg class="a" style="left:510px;top:26px" width="90" height="90"><g transform="translate(90,0) scale(-1,1)"><path d="M10 80Q5 30 40 15T85 8M20 60Q10 30 40 25T70 40" fill="none" stroke="#D0CAB4" stroke-width="5"/></g></svg>
<div class="t" style="left:0;width:627px;text-align:center;top:59px;font-size:38px;color:#A0523A;letter-spacing:0px">Long-Term Memory</div>
<div class="a" style="left:62px;top:237px;width:9px;height:9px;background:#C9A44C"></div>
<div class="t" style="left:82px;top:229px;font-size:24px;font-weight:bold;color:#2E1C08;line-height:27px;letter-spacing:-1px;-webkit-text-stroke:1.4px #2E1C08;transform:scaleX(0.86);transform-origin:0 0">Stores all the information we have in a somewhat</div>
<div class="t" style="left:82px;top:254px;font-size:24px;font-weight:bold;color:#2E1C08;line-height:27px;letter-spacing:-1px;-webkit-text-stroke:1.4px #2E1C08;transform:scaleX(0.86);transform-origin:0 0">permanent way.</div>
</div>
<div class="a" style="left:45px;top:633px;width:138px;height:104px;border:1px solid #9C9C9C"></div>
<svg class="a" style="left:25px;top:480px" width="16" height="12" viewBox="0 0 16 12"><path d="M1 4H6M1 7H6M2 10H6" stroke="#556" stroke-width="0.8"/><path d="M10 1L15 6L10 11L5 6Z" fill="#4A6AE0" stroke="#223"/></svg>
<div class="a" style="left:9px;top:718px;width:206px;height:3px;background:#F0F0F0"></div>
<div class="a" style="left:222px;top:116px;width:668px;height:605px;background:#F0F0F0;border-left:2px solid #6E6E6E;border-top:2px solid #6E6E6E;border-right:1px solid #D8D8D8"></div>
<div class="a" style="left:229px;top:121px;width:51px;height:25px;background:#fff;border:1px solid #A9A9A9;border-bottom:none"></div>
<div class="t" style="left:231px;top:127px;font-size:12px;font-weight:bold">Normal</div>
<div class="a" style="left:280px;top:123px;width:45px;height:20px;background:linear-gradient(#F4F4F4,#E4E4E4);border:1px solid #ACACAC;border-left:none;border-bottom:none"></div>
<div class="t" style="left:281px;top:128px;font-size:12px">Outline</div>
<div class="a" style="left:325px;top:123px;width:38px;height:20px;background:linear-gradient(#F4F4F4,#E4E4E4);border:1px solid #ACACAC;border-left:none;border-bottom:none"></div>
<div class="t" style="left:328px;top:128px;font-size:12px">Notes</div>
<div class="a" style="left:363px;top:123px;width:55px;height:20px;background:linear-gradient(#F4F4F4,#E4E4E4);border:1px solid #ACACAC;border-left:none;border-bottom:none"></div>
<div class="t" style="left:366px;top:128px;font-size:12px">Handout</div>
<div class="a" style="left:418px;top:123px;width:72px;height:20px;background:linear-gradient(#F4F4F4,#E4E4E4);border:1px solid #ACACAC;border-left:none;border-bottom:none"></div>
<div class="t" style="left:423px;top:128px;font-size:12px">Slide Sorter</div>
<div class="a" style="left:224px;top:146px;width:647px;height:559px;background:#ABABAB"></div>
<div class="a" style="left:871px;top:146px;width:18px;height:559px;background:#F0F0F0"></div>
<div class="a" style="left:872px;top:270px;width:15px;height:310px;background:#CDCDCD"></div>
<svg class="a" style="left:874px;top:151px" width="10" height="7" viewBox="0 0 10 7"><path d="M1 6L5.0 1L9 6" fill="none" stroke="#555" stroke-width="2"/></svg>
<svg class="a" style="left:874px;top:691px" width="10" height="7" viewBox="0 0 10 7"><path d="M1 1L5.0 6L9 1" fill="none" stroke="#555" stroke-width="2"/></svg>
<div class="a" style="left:224px;top:705px;width:665px;height:16px;background:#F0F0F0"></div>
<div class="a" style="left:442px;top:706px;width:210px;height:13px;background:#CDCDCD"></div>
<svg class="a" style="left:228px;top:707px" width="8" height="11" viewBox="0 0 8 11"><path d="M6 1.5L2 5.5L6 9.5" fill="none" stroke="#555" stroke-width="2"/></svg>
<svg class="a" style="left:859px;top:707px" width="8" height="11" viewBox="0 0 8 11"><path d="M2 1.5L6 5.5L2 9.5" fill="none" stroke="#555" stroke-width="2"/></svg>
<div class="a" style="left:234px;top:190px;width:627px;height:470px;box-shadow:1px 2px 5px 1px rgba(0,0,0,.4)"></div>
<div class="a" style="left:234px;top:190px;width:627px;height:470px">
<svg class="a" style="left:0;top:0" width="627" height="470"><defs><pattern id="bp1" width="15.7" height="15.7" patternUnits="userSpaceOnUse" x="-0.35" y="0"><rect width="15.7" height="15.7" fill="#594430"/><path d="M7.85 0.9Q11.5 4.2 14.8 7.85Q11.5 11.5 7.85 14.8Q4.2 11.5 0.9 7.85Q4.2 4.2 7.85 0.9Z" fill="#644E37" stroke="#43311D" stroke-width="1.2"/><circle cx="0" cy="7.85" r="1.3" fill="#6E5A3E"/><circle cx="15.7" cy="7.85" r="1.3" fill="#6E5A3E"/><circle cx="7.85" cy="0" r="1.3" fill="#6E5A3E"/><circle cx="7.85" cy="15.7" r="1.3" fill="#6E5A3E"/></pattern></defs><rect width="627" height="470" fill="url(#bp1)"/></svg>
<div class="a" style="left:14px;top:14px;width:599px;height:439px;background:#E2C964;box-shadow:0 0 0 1px #3A2814, 0 0 3px 2px rgba(35,22,10,.55)"></div>
<div class="a" style="left:18px;top:18px;width:591px;height:431px;background:radial-gradient(circle at 0 0,rgba(232,205,100,.6),rgba(232,205,100,0) 75px),radial-gradient(circle at 100% 0,rgba(232,205,100,.6),rgba(232,205,100,0) 75px),radial-gradient(circle at 0 100%,rgba(232,205,100,.6),rgba(232,205,100,0) 75px),radial-gradient(circle at 100% 100%,rgba(232,205,100,.6),rgba(232,205,100,0) 75px),#F2F2F1;box-shadow:inset 0 0 0 1px #CDB865, inset 0 0 0 10px #F2E6AE, inset 0 0 44px 6px rgba(238,222,150,.85)"></div>
<svg class="a" style="left:0;top:0" width="627" height="470"><path d="M86 28.3H541M28.6 90V439.5H598.4V90M28.6 123H598.4M28.6 125.5H598.4" fill="none" stroke="#D2CCB2" stroke-width="1"/><g fill="none" stroke="#C9C4B1" stroke-width="1.3"><g transform="translate(21,20)"><path d="M65 8.3H74"/><path d="M65 8.3Q53 8.3 51 22"/><ellipse cx="58" cy="24.5" rx="6" ry="12.5"/><path d="M40 29Q60 20 82 15.5" stroke-width="0.9"/><path d="M14 27H44Q50 27 52 20"/><path d="M11 34H45Q52 34 50 39Q46 44 43 38"/><path d="M9 40H37Q44 40 43 46Q41 52 36 45"/><path d="M25 12V52M32.5 14V52M37 14V52"/><ellipse cx="11" cy="12" rx="3.5" ry="4.5"/><path d="M11 16.5Q14 26 24 29Q38 30 38 18Q37 8 27 8Q19 9 21 16Q24 24 38 27"/><path d="M13 13Q6 22 10 32Q15 40 25 39Q31 37 26 28"/><ellipse cx="24" cy="62" rx="11" ry="7"/><path d="M14 60Q18 48 30 49Q38 51 36 56"/><path d="M7.6 110V70Q8 62 14 58"/><path d="M22 40Q14 62 18 80Q20 90 28 94" stroke-width="0.9"/></g><g transform="translate(606,20) scale(-1,1)"><path d="M65 8.3H74"/><path d="M65 8.3Q53 8.3 51 22"/><ellipse cx="58" cy="24.5" rx="6" ry="12.5"/><path d="M40 29Q60 20 82 15.5" stroke-width="0.9"/><path d="M14 27H44Q50 27 52 20"/><path d="M11 34H45Q52 34 50 39Q46 44 43 38"/><path d="M9 40H37Q44 40 43 46Q41 52 36 45"/><path d="M25 12V52M32.5 14V52M37 14V52"/><ellipse cx="11" cy="12" rx="3.5" ry="4.5"/><path d="M11 16.5Q14 26 24 29Q38 30 38 18Q37 8 27 8Q19 9 21 16Q24 24 38 27"/><path d="M13 13Q6 22 10 32Q15 40 25 39Q31 37 26 28"/><ellipse cx="24" cy="62" rx="11" ry="7"/><path d="M14 60Q18 48 30 49Q38 51 36 56"/><path d="M7.6 110V70Q8 62 14 58"/><path d="M22 40Q14 62 18 80Q20 90 28 94" stroke-width="0.9"/></g></g></svg>
<div class="t" style="left:0;width:627px;text-align:center;top:59px;font-size:38px;color:#A0523A;letter-spacing:1.2px;-webkit-text-stroke:0.4px #A0523A;transform:scaleX(1.1);transform-origin:311px 0">A model of Memory</div>
<div class="t" style="left:56px;top:245px;font-family:'Liberation Serif',serif;font-style:italic;font-size:15px;color:#5A3A1A">Sensory Input</div>
<div class="t" style="left:215px;top:256px;font-family:'Liberation Serif',serif;font-style:italic;font-size:15px;color:#5A3A1A">Attention</div>
<div class="t" style="left:305px;top:198px;font-family:'Liberation Serif',serif;font-style:italic;font-size:15px;color:#5A3A1A">Rehearsal</div>
<div class="t" style="left:389px;top:245px;font-family:'Liberation Serif',serif;font-style:italic;font-size:15px;color:#5A3A1A">Storage</div>
<div class="t" style="left:403px;top:301px;font-family:'Liberation Serif',serif;font-style:italic;font-size:15px;color:#5A3A1A">Retrieval</div>
<svg class="a" style="left:-234px;top:-190px" width="1183" height="783"><line x1="290" y1="469.3" x2="361.2" y2="469.3" stroke="#000" stroke-width="5"/><polygon points="371.0,469.3 357.0,476.5 361.2,469.3 357.0,462.1" fill="#000"/><line x1="445" y1="469.5" x2="509.2" y2="469.5" stroke="#000" stroke-width="5"/><polygon points="519.0,469.5 505.0,476.7 509.2,469.5 505.0,462.3" fill="#000"/><line x1="611" y1="452.5" x2="681.2" y2="452.5" stroke="#000" stroke-width="5"/><polygon points="691.0,452.5 677.0,459.7 681.2,452.5 677.0,445.3" fill="#000"/><line x1="692" y1="488.5" x2="628.8" y2="488.5" stroke="#000" stroke-width="5"/><polygon points="619.0,488.5 633.0,481.3 628.8,488.5 633.0,495.7" fill="#000"/><line x1="563" y1="407" x2="555.5" y2="423.4" stroke="#000" stroke-width="4"/><polygon points="552.0,431.0 550.6,417.2 555.5,423.4 563.4,423.0" fill="#000"/><line x1="593" y1="431" x2="585.0" y2="416.4" stroke="#000" stroke-width="4"/><polygon points="581.0,409.0 592.9,416.2 585.0,416.4 580.6,422.9" fill="#000"/></svg>
<div class="a" style="left:148px;top:249px;width:61px;height:61px;background:#4B0082;border-radius:9px"></div>
<div class="t" style="left:148px;top:267px;width:61px;font-size:11px;font-weight:bold;color:#fff;letter-spacing:1.1px;text-indent:1.1px;text-align:center;line-height:13px;text-shadow:1px 1px 0 #000,0 0 1px #000">Sensory<br>memory</div>
<div class="a" style="left:295px;top:243px;width:79px;height:73px;background:#FF9412"></div>
<div class="t" style="left:295px;top:267px;width:79px;font-size:11px;font-weight:bold;color:#fff;letter-spacing:1.1px;text-indent:1.1px;text-align:center;line-height:13px;text-shadow:1px 1px 0 #000,0 0 1px #000">Short-term<br>memory</div>
<div class="a" style="left:462px;top:233px;width:98px;height:94px;background:#008000;border-radius:10px"></div>
<div class="t" style="left:462px;top:267px;width:98px;font-size:11px;font-weight:bold;color:#fff;letter-spacing:1.1px;text-indent:1.1px;text-align:center;line-height:13px;text-shadow:1px 1px 0 #000,0 0 1px #000">Long-term<br>memory</div>
</div>
<div class="a" style="left:525px;top:428px;width:9px;height:9px;background:#C6E83A;border:1px solid #333;border-radius:50%"></div>
<div class="a" style="left:525px;top:465px;width:9px;height:9px;background:#3EE8E0;border:1px solid #223"></div>
<div class="a" style="left:525px;top:502px;width:9px;height:9px;background:#3EE8E0;border:1px solid #223"></div>
<div class="a" style="left:564px;top:428px;width:9px;height:9px;background:#3EE8E0;border:1px solid #223"></div>
<div class="a" style="left:564px;top:502px;width:9px;height:9px;background:#3EE8E0;border:1px solid #223"></div>
<div class="a" style="left:604px;top:428px;width:9px;height:9px;background:#3EE8E0;border:1px solid #223"></div>
<div class="a" style="left:604px;top:465px;width:9px;height:9px;background:#3EE8E0;border:1px solid #223"></div>
<div class="a" style="left:604px;top:502px;width:9px;height:9px;background:#3EE8E0;border:1px solid #223"></div>
<div class="a" style="left:889px;top:116px;width:7px;height:605px;background:#F0F0F0"></div>
<div class="a" style="left:216px;top:116px;width:6px;height:605px;background:#F0F0F0"></div>
<div class="a" style="left:216px;top:116px;width:1px;height:605px;background:#FFFFFF"></div>
<div class="a" style="left:889px;top:116px;width:1px;height:605px;background:#FFFFFF"></div>
<svg class="a" style="left:218px;top:403px" width="4" height="33" viewBox="0 0 4 33"><path d="M0 8L3 9L1 11Z" fill="#666"/><path d="M0 12L3 13L1 15Z" fill="#666"/><path d="M0 16L3 17L1 19Z" fill="#666"/><path d="M0 20L3 21L1 23Z" fill="#666"/><path d="M0 24L3 25L1 27Z" fill="#666"/><path d="M3 0L0 2L3 4Z" fill="#555"/><path d="M0 28L3 30L0 32Z" fill="#555"/></svg>
<svg class="a" style="left:890px;top:403px" width="4" height="33" viewBox="0 0 4 33"><path d="M0 8L3 9L1 11Z" fill="#666"/><path d="M0 12L3 13L1 15Z" fill="#666"/><path d="M0 16L3 17L1 19Z" fill="#666"/><path d="M0 20L3 21L1 23Z" fill="#666"/><path d="M0 24L3 25L1 27Z" fill="#666"/><path d="M3 0L0 2L3 4Z" fill="#555"/><path d="M0 28L3 30L0 32Z" fill="#555"/></svg>
<div class="a" style="left:895px;top:116px;width:280px;height:605px;background:#F0F0F0;border-left:1px solid #A0A0A0;border-top:1px solid #A0A0A0;border-right:1px solid #A0A0A0;border-bottom:1px solid #A0A0A0"></div>
<div class="a" style="left:899px;top:120px;width:236px;height:599px;background:#F0F0F0;border:1px solid #DEDEDE"></div>
<div class="t" style="left:909px;top:129px;font-size:12px;font-weight:bold;color:#111">Properties</div>
<svg class="a" style="left:1119px;top:127px" width="11" height="11" viewBox="0 0 11 11"><path d="M1.5 1.5L9.5 9.5M9.5 1.5L1.5 9.5" stroke="#4A5560" stroke-width="1.8"/></svg>
<div class="a" style="left:900px;top:147px;width:234px;height:27px;background:linear-gradient(#E3E3E3,#EDEDED 60%,#EFEFEF)"></div>
<div class="a" style="left:905px;top:156px;width:9px;height:9px;background:#fff;border:1px solid #3A4A5A"></div>
<div class="a" style="left:907px;top:160px;width:5px;height:1px;background:#111"></div>
<div class="a" style="left:909px;top:158px;width:1px;height:5px;background:#111"></div>
<div class="t" style="left:918px;top:156px;font-size:12px;font-weight:bold;color:#1A1A1A">Text</div>
<div class="a" style="left:1117px;top:153px;width:11px;height:10px;background:#fff;border:1px solid #3A6AB8;border-top:2px solid #3A6AB8"></div>
<div class="a" style="left:1120px;top:159px;width:1px;height:1px;background:#223"></div>
<div class="a" style="left:1122px;top:159px;width:1px;height:1px;background:#223"></div>
<div class="a" style="left:1124px;top:159px;width:1px;height:1px;background:#223"></div>
<div class="a" style="left:900px;top:174px;width:234px;height:27px;background:linear-gradient(#E3E3E3,#EDEDED 60%,#EFEFEF)"></div>
<div class="a" style="left:905px;top:183px;width:9px;height:9px;background:#fff;border:1px solid #3A4A5A"></div>
<div class="a" style="left:907px;top:187px;width:5px;height:1px;background:#111"></div>
<div class="a" style="left:909px;top:185px;width:1px;height:5px;background:#111"></div>
<div class="t" style="left:918px;top:183px;font-size:12px;font-weight:bold;color:#1A1A1A">Paragraph</div>
<div class="a" style="left:1117px;top:180px;width:11px;height:10px;background:#fff;border:1px solid #3A6AB8;border-top:2px solid #3A6AB8"></div>
<div class="a" style="left:1120px;top:186px;width:1px;height:1px;background:#223"></div>
<div class="a" style="left:1122px;top:186px;width:1px;height:1px;background:#223"></div>
<div class="a" style="left:1124px;top:186px;width:1px;height:1px;background:#223"></div>
<div class="a" style="left:900px;top:201px;width:234px;height:27px;background:linear-gradient(#E3E3E3,#EDEDED 60%,#EFEFEF)"></div>
<div class="a" style="left:905px;top:210px;width:9px;height:9px;background:#fff;border:1px solid #3A4A5A"></div>
<div class="a" style="left:907px;top:214px;width:5px;height:1px;background:#111"></div>
<div class="t" style="left:918px;top:210px;font-size:12px;font-weight:bold;color:#1A1A1A">Area</div>
<div class="a" style="left:1117px;top:207px;width:11px;height:10px;background:#fff;border:1px solid #3A6AB8;border-top:2px solid #3A6AB8"></div>
<div class="a" style="left:1120px;top:213px;width:1px;height:1px;background:#223"></div>
<div class="a" style="left:1122px;top:213px;width:1px;height:1px;background:#223"></div>
<div class="a" style="left:1124px;top:213px;width:1px;height:1px;background:#223"></div>
<div class="t" style="left:906px;top:232px;font-size:12px;color:#111"><u>F</u>ill:</div>
<div class="a" style="left:906px;top:251px;width:108px;height:23px;background:#fff;border:1px solid #A5A7AB"></div>
<div class="t" style="left:908.5px;top:257px;font-size:12px;">Color</div>
<div class="a" style="left:996px;top:252px;width:17px;height:21px;background:linear-gradient(#F6F6F6,#E2E2E2);border-left:1px solid #B0B0B0"></div>
<svg class="a" style="left:999.5px;top:259px" width="9" height="6.5" viewBox="0 0 9 6.5"><path d="M1 1L4.5 5.5L8 1" fill="none" stroke="#555" stroke-width="2"/></svg>
<div class="a" style="left:1020px;top:250px;width:100px;height:25px;background:#F7F7F7;border:1px solid #E2E2E2"></div>
<svg class="a" style="left:1027px;top:255px" width="16" height="14" viewBox="0 0 16 14"><path d="M2 6L7 2L13 8L7 12Z" fill="#CFE4F8" stroke="#2A4A70" stroke-width="1.2"/><path d="M13 8Q16 11 15 13" stroke="#2A4A70" stroke-width="1.5" fill="none"/></svg>
<div class="a" style="left:1045px;top:256px;width:56px;height:12px;background:#FF9412;border:1px solid #3A5A8A;box-shadow:inset 0 0 0 1px #fff"></div>
<svg class="a" style="left:1107px;top:262px" width="8" height="5" viewBox="0 0 8 5"><path d="M0.5 0.5H7.5L4 4.5Z" fill="#111"/></svg>
<div class="t" style="left:906px;top:284px;font-size:12px;color:#111"><u>T</u>ransparency:</div>
<div class="a" style="left:906px;top:303px;width:108px;height:23px;background:#fff;border:1px solid #A5A7AB"></div>
<div class="t" style="left:908.5px;top:309px;font-size:12px;">None</div>
<div class="a" style="left:996px;top:304px;width:17px;height:21px;background:linear-gradient(#F6F6F6,#E2E2E2);border-left:1px solid #B0B0B0"></div>
<svg class="a" style="left:999.5px;top:311px" width="9" height="6.5" viewBox="0 0 9 6.5"><path d="M1 1L4.5 5.5L8 1" fill="none" stroke="#555" stroke-width="2"/></svg>
<div class="a" style="left:1020px;top:303px;width:108px;height:23px;background:#fff;border:1px solid #A5A7AB"></div>
<div class="a" style="left:1110px;top:305px;width:15px;height:19px;background:linear-gradient(#F4F4F4,#E2E2E2);border:1px solid #B5B5B5"></div>
<div class="a" style="left:1111px;top:314px;width:13px;height:1px;background:#B5B5B5"></div>
<svg class="a" style="left:1113px;top:308px" width="8" height="4" viewBox="0 0 8 4"><path d="M0 4L4 0L8 4Z" fill="#222"/></svg>
<svg class="a" style="left:1113px;top:317px" width="8" height="4" viewBox="0 0 8 4"><path d="M0 0L8 0L4 4Z" fill="#222"/></svg>
<div class="t" style="left:1023.5px;top:309px;font-size:12px">0%</div>
<div class="a" style="left:900px;top:336px;width:234px;height:27px;background:linear-gradient(#E3E3E3,#EDEDED 60%,#EFEFEF)"></div>
<div class="a" style="left:905px;top:345px;width:9px;height:9px;background:#fff;border:1px solid #3A4A5A"></div>
<div class="a" style="left:907px;top:349px;width:5px;height:1px;background:#111"></div>
<div class="t" style="left:918px;top:345px;font-size:12px;font-weight:bold;color:#1A1A1A">Line</div>
<div class="a" style="left:1117px;top:342px;width:11px;height:10px;background:#fff;border:1px solid #3A6AB8;border-top:2px solid #3A6AB8"></div>
<div class="a" style="left:1120px;top:348px;width:1px;height:1px;background:#223"></div>
<div class="a" style="left:1122px;top:348px;width:1px;height:1px;background:#223"></div>
<div class="a" style="left:1124px;top:348px;width:1px;height:1px;background:#223"></div>
<div class="t" style="left:906px;top:366px;font-size:12px;color:#111"><u>W</u>idth:</div>
<div class="t" style="left:1020px;top:366px;font-size:12px;color:#111"><u>C</u>olor:</div>
<div class="a" style="left:906px;top:381px;width:100px;height:27px;background:#F7F7F7;border:1px solid #E2E2E2"></div>
<div class="a" style="left:912px;top:393px;width:77px;height:1px;background:#111"></div>
<svg class="a" style="left:993px;top:391px" width="8" height="5" viewBox="0 0 8 5"><path d="M0.5 0.5H7.5L4 4.5Z" fill="#111"/></svg>
<div class="a" style="left:1020px;top:381px;width:100px;height:27px;background:#F7F7F7;border:1px solid #E2E2E2"></div>
<svg class="a" style="left:1025px;top:386px" width="18" height="16" viewBox="0 0 18 16"><path d="M3 12L12 3L14 5L5 14L2 15Z" fill="#F0B840" stroke="#6A4A10"/><path d="M7 15H16" stroke="#2A4A90" stroke-width="1.5"/></svg>
<div class="a" style="left:1045px;top:387px;width:56px;height:14px;background:#808080;border:1px solid #3A5A8A;box-shadow:inset 0 0 0 1px #fff"></div>
<svg class="a" style="left:1107px;top:393px" width="8" height="5" viewBox="0 0 8 5"><path d="M0.5 0.5H7.5L4 4.5Z" fill="#111"/></svg>
<div class="t" style="left:906px;top:420px;font-size:12px;color:#111"><u>S</u>tyle:</div>
<div class="t" style="left:1020px;top:420px;font-size:12px;color:#111"><u>T</u>ransparency:</div>
<div class="a" style="left:906px;top:437px;width:108px;height:23px;background:#fff;border:1px solid #A5A7AB"></div>
<div class="t" style="left:908.5px;top:443px;font-size:12px;">- none -</div>
<div class="a" style="left:996px;top:438px;width:17px;height:21px;background:linear-gradient(#F6F6F6,#E2E2E2);border-left:1px solid #B0B0B0"></div>
<svg class="a" style="left:999.5px;top:445px" width="9" height="6.5" viewBox="0 0 9 6.5"><path d="M1 1L4.5 5.5L8 1" fill="none" stroke="#555" stroke-width="2"/></svg>
<div class="a" style="left:1020px;top:437px;width:108px;height:23px;background:#fff;border:1px solid #A5A7AB"></div>
<div class="a" style="left:1110px;top:439px;width:15px;height:19px;background:linear-gradient(#F4F4F4,#E2E2E2);border:1px solid #B5B5B5"></div>
<div class="a" style="left:1111px;top:448px;width:13px;height:1px;background:#B5B5B5"></div>
<svg class="a" style="left:1113px;top:442px" width="8" height="4" viewBox="0 0 8 4"><path d="M0 4L4 0L8 4Z" fill="#222"/></svg>
<svg class="a" style="left:1113px;top:451px" width="8" height="4" viewBox="0 0 8 4"><path d="M0 0L8 0L4 4Z" fill="#222"/></svg>
<div class="t" style="left:1023.5px;top:443px;font-size:12px">0%</div>
<div class="t" style="left:906px;top:476px;font-size:12px;color:#111"><u>A</u>rrow:</div>
<div class="a" style="left:906px;top:491px;width:108px;height:23px;background:#fff;border:1px solid #A5A7AB"></div>
<div class="t" style="left:908.5px;top:497px;font-size:12px;">- none -</div>
<div class="a" style="left:996px;top:492px;width:17px;height:21px;background:linear-gradient(#F6F6F6,#E2E2E2);border-left:1px solid #B0B0B0"></div>
<svg class="a" style="left:999.5px;top:499px" width="9" height="6.5" viewBox="0 0 9 6.5"><path d="M1 1L4.5 5.5L8 1" fill="none" stroke="#555" stroke-width="2"/></svg>
<div class="a" style="left:1020px;top:491px;width:108px;height:23px;background:#fff;border:1px solid #A5A7AB"></div>
<div class="t" style="left:1022.5px;top:497px;font-size:12px;">- none -</div>
<div class="a" style="left:1110px;top:492px;width:17px;height:21px;background:linear-gradient(#F6F6F6,#E2E2E2);border-left:1px solid #B0B0B0"></div>
<svg class="a" style="left:1113.5px;top:499px" width="9" height="6.5" viewBox="0 0 9 6.5"><path d="M1 1L4.5 5.5L8 1" fill="none" stroke="#555" stroke-width="2"/></svg>
<div class="t" style="left:906px;top:529px;font-size:12px;color:#111"><u>C</u>orner style</div>
<div class="t" style="left:1020px;top:529px;font-size:12px;color:#111">Ca<u>p</u> style</div>
<div class="a" style="left:906px;top:546px;width:108px;height:23px;background:#fff;border:1px solid #A5A7AB"></div>
<div class="t" style="left:908.5px;top:552px;font-size:12px;">Rounded</div>
<div class="a" style="left:996px;top:547px;width:17px;height:21px;background:linear-gradient(#F6F6F6,#E2E2E2);border-left:1px solid #B0B0B0"></div>
<svg class="a" style="left:999.5px;top:554px" width="9" height="6.5" viewBox="0 0 9 6.5"><path d="M1 1L4.5 5.5L8 1" fill="none" stroke="#555" stroke-width="2"/></svg>
<div class="a" style="left:1020px;top:546px;width:108px;height:23px;background:#fff;border:1px solid #A5A7AB"></div>
<div class="t" style="left:1022.5px;top:552px;font-size:12px;">Flat</div>
<div class="a" style="left:1110px;top:547px;width:17px;height:21px;background:linear-gradient(#F6F6F6,#E2E2E2);border-left:1px solid #B0B0B0"></div>
<svg class="a" style="left:1113.5px;top:554px" width="9" height="6.5" viewBox="0 0 9 6.5"><path d="M1 1L4.5 5.5L8 1" fill="none" stroke="#555" stroke-width="2"/></svg>
<div class="a" style="left:900px;top:578px;width:234px;height:28px;background:linear-gradient(#E3E3E3,#EDEDED 60%,#EFEFEF)"></div>
<div class="a" style="left:905px;top:587px;width:9px;height:9px;background:#fff;border:1px solid #3A4A5A"></div>
<div class="a" style="left:907px;top:591px;width:5px;height:1px;background:#111"></div>
<div class="a" style="left:909px;top:589px;width:1px;height:5px;background:#111"></div>
<div class="t" style="left:918px;top:587px;font-size:12px;font-weight:bold;color:#1A1A1A">Position and Size</div>
<div class="a" style="left:1117px;top:584px;width:11px;height:10px;background:#fff;border:1px solid #3A6AB8;border-top:2px solid #3A6AB8"></div>
<div class="a" style="left:1120px;top:590px;width:1px;height:1px;background:#223"></div>
<div class="a" style="left:1122px;top:590px;width:1px;height:1px;background:#223"></div>
<div class="a" style="left:1124px;top:590px;width:1px;height:1px;background:#223"></div>
<div class="a" style="left:900px;top:606px;width:234px;height:1px;background:#DEDEDE"></div>
<div class="a" style="left:1135px;top:117px;width:39px;height:603px;background:#F0F0F0;border-left:1px solid #DADADA"></div>
<svg class="a" style="left:1148px;top:128px" width="14" height="14" viewBox="0 0 14 14"><path d="M1 2H10M1 5H10M1 8H10" stroke="#333" stroke-width="1.3"/><path d="M7 9H13L10 12Z" fill="#111"/></svg>
<div class="a" style="left:1144px;top:155px;width:24px;height:1px;background:#D8D8D8"></div>
<div class="a" style="left:1139px;top:159px;width:32px;height:32px;background:#F4F4F4;border:1px solid #9FA7B0;border-radius:4px"></div>
<svg class="a" style="left:1144px;top:163px" width="22" height="26" viewBox="0 0 22 26"><ellipse cx="11" cy="24" rx="9" ry="2" fill="rgba(0,0,0,.15)"/><path d="M1 5L6 2.5L11 5V11L6 13.5L1 11Z" fill="#2E9BEA"/><path d="M1 5L6 7.5L11 5L6 2.5Z" fill="#7CC8F8"/><path d="M10 5L15 2.5L20 5V11L15 13.5L10 11Z" fill="#70CC30"/><path d="M10 5L15 7.5L20 5L15 2.5Z" fill="#A8E870"/><path d="M1 11L6 8.5L11 11V17L6 19.5L1 17Z" fill="#2E9BEA"/><path d="M1 11L6 13.5L11 11L6 8.5Z" fill="#7CC8F8"/><path d="M10 11L15 8.5L20 11V17L15 19.5L10 17Z" fill="#66C22A"/><path d="M10 11L15 13.5L20 11L15 8.5Z" fill="#A8E870"/><path d="M6 7.5V13.5M15 7.5V13.5M6 13.5V19.5M15 13.5V19.5" stroke="#fff" stroke-width="0.6" opacity=".6"/></svg>
<svg class="a" style="left:1144px;top:198px" width="22" height="26" viewBox="0 0 22 26"><ellipse cx="11" cy="24" rx="9" ry="2" fill="rgba(0,0,0,.15)"/><rect x="1.5" y="1.5" width="18" height="16" fill="#F4F6FA" stroke="#6A7A90"/><rect x="3" y="3" width="15" height="2.5" fill="#4A7ACA"/><path d="M3 8H18" stroke="#9AAAC0"/><rect x="4" y="9" width="3" height="10" fill="#1E5FD8"/><rect x="9" y="9" width="3" height="10" fill="#F0A010"/><rect x="14" y="9" width="3" height="10" fill="#20C030"/><path d="M4 9L5.5 7L7 9M9 9L10.5 7L12 9M14 9L15.5 7L17 9" fill="#E8C090"/></svg>
<svg class="a" style="left:1144px;top:233px" width="22" height="26" viewBox="0 0 22 26"><ellipse cx="11" cy="24" rx="9" ry="2" fill="rgba(0,0,0,.15)"/><path d="M9.5 1L12.3 7L19 7.8L14 12.3L15.4 19L9.5 15.6L3.6 19L5 12.3L0 7.8L6.7 7Z" fill="#F8C030" stroke="#D08A10" stroke-width="1"/><path d="M9.5 3L11.5 8L16 8.5" fill="none" stroke="#FFE890" stroke-width="1.2"/><path d="M15 2H22M17 5H22M18 10H22M17 14H22" stroke="#F0A830" stroke-width="1"/></svg>
<svg class="a" style="left:1144px;top:267px" width="22" height="26" viewBox="0 0 22 26"><ellipse cx="11" cy="24" rx="9" ry="2" fill="rgba(0,0,0,.15)"/><rect x="1" y="5" width="12" height="13" fill="#fff" stroke="#6A6A6A"/><path d="M3 8H9M3 10H9M3 14H9" stroke="#9A9A9A"/><rect x="8" y="1" width="13" height="15" fill="#E8F2FC" stroke="#7A9AC0"/><rect x="10" y="3" width="9" height="2" fill="#3A80D8"/><path d="M10 15L14 10L17 12L21 9V16H10Z" fill="#5AAA40"/><path d="M14 11L17 13L21 11" fill="#C08040"/><path d="M1 11H10M7 8L10 11L7 14" stroke="#1A70D0" stroke-width="2.2" fill="none"/></svg>
<svg class="a" style="left:1144px;top:302px" width="22" height="26" viewBox="0 0 22 26"><ellipse cx="11" cy="24" rx="9" ry="2" fill="rgba(0,0,0,.15)"/><path d="M4 19L10 6L18 16Z" fill="#1E5AA0"/><path d="M10 6Q15 9 18 16" stroke="#40B040" stroke-width="2.5" fill="none"/><path d="M4 19Q8 14 10 6" stroke="#3A9AE0" stroke-width="2" fill="none"/><circle cx="3.5" cy="8" r="2.2" fill="#F040A0"/><path d="M16 0.5L17.2 3.5L20.5 3.7L18 5.8L18.8 9L16 7.3L13.2 9L14 5.8L11.5 3.7L14.8 3.5Z" fill="#F8C820" stroke="#C09010" stroke-width="0.5"/><circle cx="19.5" cy="13" r="2" fill="#F050B0"/><path d="M7 2L8 4L10 4L8.5 5.5L9 7.5L7 6.3L5 7.5L5.5 5.5L4 4L6 4Z" fill="#C050F0"/></svg>
<svg class="a" style="left:1144px;top:338px" width="22" height="26" viewBox="0 0 22 26"><ellipse cx="11" cy="24" rx="9" ry="2" fill="rgba(0,0,0,.15)"/><path d="M1 7L16 2L21 15L6 20Z" fill="#fff" stroke="#7A7A80"/><path d="M4 8L15 4.5L18.5 14L7.5 17.5Z" fill="#70B8F0"/><path d="M7.5 17.5L11 11L14 13L18.5 14Z" fill="#40A030"/><circle cx="9" cy="9" r="1.5" fill="#F8F040"/></svg>
<svg class="a" style="left:1144px;top:373px" width="22" height="26" viewBox="0 0 22 26"><ellipse cx="11" cy="24" rx="9" ry="2" fill="rgba(0,0,0,.15)"/><circle cx="11" cy="11" r="10" fill="#F8A820" stroke="#C07010"/><circle cx="11" cy="11" r="7.5" fill="#fff" stroke="#C8C8C8" stroke-width="0.6"/><path d="M15.5 6.5L12.2 12.2L6.5 15.5L9.8 9.8Z" fill="#E83030"/><path d="M6.5 15.5L9.8 9.8L12.2 12.2Z" fill="#2A60C0"/><text x="9" y="5.5" font-size="4" font-family="Liberation Sans" font-weight="bold" fill="#333">N</text></svg>
<div class="a" style="left:8px;top:721px;width:1167px;height:32px;background:#F4F5F7"></div>
<div class="a" style="left:8px;top:752px;width:1167px;height:1px;background:#BDBDBD"></div>
<div class="a" style="left:8px;top:720px;width:1167px;height:2px;background:#F4F5F7"></div>
<div class="a" style="left:8px;top:721px;width:1167px;height:1px;background:#A8A8A8"></div>
<div class="a" style="left:222px;top:721px;width:668px;height:1px;background:#E2E2E2"></div>
<div class="a" style="left:797px;top:721px;width:1px;height:31px;background:#DADBDD"></div>
<svg class="a" style="left:12px;top:729px" width="4" height="20" viewBox="0 0 4 20"><path d="M0 0H3L0 3Z" fill="#6A6A6A"/><path d="M0 4H3L0 7Z" fill="#6A6A6A"/><path d="M0 8H3L0 11Z" fill="#6A6A6A"/><path d="M0 12H3L0 15Z" fill="#6A6A6A"/><path d="M0 16H3L0 19Z" fill="#6A6A6A"/></svg>
<div class="a" style="left:20px;top:724px;width:25px;height:27px;background:#C9E0F7;border:1px solid #86B6E6"></div>
<svg class="a" style="left:27px;top:729px" width="12" height="17" viewBox="0 0 12 17"><path d="M1.5 1.5V13L4.5 10.5L7 15.5L9 14.5L6.8 9.5H10.5Z" fill="#fff" stroke="#111" stroke-width="1.1"/></svg>
<div class="a" style="left:49px;top:730px;width:1px;height:14px;background:#C9CACC"></div>
<svg class="a" style="left:57px;top:729px" width="16" height="16" viewBox="0 0 16 16"><path d="M1.5 14.5L14.5 1.5" stroke="#2A6AD0" stroke-width="1.6"/></svg>
<svg class="a" style="left:80px;top:731px" width="18" height="12" viewBox="0 0 18 12"><path d="M1 6H15M10 1.5L15.5 6L10 10.5" stroke="#2A6AD0" stroke-width="2" fill="none"/></svg>
<svg class="a" style="left:106px;top:730px" width="17" height="13" viewBox="0 0 17 13"><defs><linearGradient id="gb1" x1="0" y1="0" x2="0" y2="1"><stop offset="0" stop-color="#A8D4F8"/><stop offset="1" stop-color="#2A78D8"/></linearGradient></defs><rect x="0.5" y="2.5" width="15" height="9" fill="url(#gb1)" stroke="#1A4A9A"/></svg>
<svg class="a" style="left:131px;top:730px" width="18" height="14" viewBox="0 0 18 14"><ellipse cx="9" cy="7" rx="8" ry="5.5" fill="url(#gb1)" stroke="#1A4A9A"/></svg>
<svg class="a" style="left:158px;top:728px" width="16" height="17" viewBox="0 0 16 17"><path d="M1 1H15V5H13Q13 3 10 3V14L12 15V16H4V15L6 14V3Q3 3 3 5H1Z" fill="#2A4A70"/></svg>
<div class="a" style="left:181px;top:730px;width:1px;height:14px;background:#C9CACC"></div>
<svg class="a" style="left:189px;top:728px" width="18" height="18" viewBox="0 0 18 18"><path d="M2 12Q6 8 9 14T16 16" stroke="#2A6AD0" stroke-width="1.5" fill="none"/><path d="M6 11L14 2L17 4L9 13L5 14Z" fill="#F0C030" stroke="#806000" stroke-width="0.8"/><path d="M14 2L17 4" stroke="#E05050" stroke-width="2"/></svg>
<svg class="a" style="left:211px;top:735px" width="8" height="5" viewBox="0 0 8 5"><path d="M0.5 0.5H7.5L4 4.5Z" fill="#111"/></svg>
<svg class="a" style="left:224px;top:729px" width="18" height="17" viewBox="0 0 18 17"><circle cx="3" cy="3" r="2.5" fill="#3A80E0" stroke="#1A4A9A"/><circle cx="14" cy="13" r="2.5" fill="#3A80E0" stroke="#1A4A9A"/><path d="M4 5L7 11H12" stroke="#2A6AD0" stroke-width="1.5" fill="none"/></svg>
<svg class="a" style="left:247px;top:735px" width="8" height="5" viewBox="0 0 8 5"><path d="M0.5 0.5H7.5L4 4.5Z" fill="#111"/></svg>
<svg class="a" style="left:260px;top:728px" width="18" height="18" viewBox="0 0 18 18"><path d="M9 1L17 9L9 17L1 9Z" fill="#3A90E8" stroke="#1A4A9A"/></svg>
<svg class="a" style="left:283px;top:735px" width="8" height="5" viewBox="0 0 8 5"><path d="M0.5 0.5H7.5L4 4.5Z" fill="#111"/></svg>
<svg class="a" style="left:296px;top:728px" width="18" height="18" viewBox="0 0 18 18"><circle cx="9" cy="9" r="8" fill="#5AA0F0" stroke="#1A4A9A"/><circle cx="6.5" cy="7" r="1" fill="#123"/><circle cx="11.5" cy="7" r="1" fill="#123"/><path d="M5 11Q9 14 13 11" stroke="#123" fill="none"/></svg>
<svg class="a" style="left:319px;top:735px" width="8" height="5" viewBox="0 0 8 5"><path d="M0.5 0.5H7.5L4 4.5Z" fill="#111"/></svg>
<svg class="a" style="left:332px;top:730px" width="18" height="14" viewBox="0 0 18 14"><path d="M1 7L6 2V5H12V2L17 7L12 12V9H6V12Z" fill="#BCD8F8" stroke="#2A6AD0"/></svg>
<svg class="a" style="left:355px;top:735px" width="8" height="5" viewBox="0 0 8 5"><path d="M0.5 0.5H7.5L4 4.5Z" fill="#111"/></svg>
<svg class="a" style="left:369px;top:729px" width="16" height="17" viewBox="0 0 16 17"><rect x="1" y="1" width="14" height="15" fill="#3A80E0" stroke="#1A4A9A"/><rect x="4" y="4" width="10" height="11" fill="#C8E0F8"/></svg>
<svg class="a" style="left:391px;top:735px" width="8" height="5" viewBox="0 0 8 5"><path d="M0.5 0.5H7.5L4 4.5Z" fill="#111"/></svg>
<svg class="a" style="left:403px;top:729px" width="18" height="17" viewBox="0 0 18 17"><path d="M2 1H16Q17 1 17 2V10Q17 11 16 11H8L4 15V11H2Q1 11 1 10V2Q1 1 2 1Z" fill="#5AA8F0" stroke="#1A5AB0"/></svg>
<svg class="a" style="left:427px;top:735px" width="8" height="5" viewBox="0 0 8 5"><path d="M0.5 0.5H7.5L4 4.5Z" fill="#111"/></svg>
<svg class="a" style="left:440px;top:728px" width="18" height="17" viewBox="0 0 18 17"><path d="M9 1L11.3 6.5L17 6.8L12.6 10.5L14 16L9 13L4 16L5.4 10.5L1 6.8L6.7 6.5Z" fill="#7AB8F8" stroke="#1A5AB0"/></svg>
<svg class="a" style="left:463px;top:735px" width="8" height="5" viewBox="0 0 8 5"><path d="M0.5 0.5H7.5L4 4.5Z" fill="#111"/></svg>
<div class="a" style="left:477px;top:730px;width:1px;height:14px;background:#C9CACC"></div>
<svg class="a" style="left:485px;top:728px" width="18" height="18" viewBox="0 0 18 18"><path d="M3 15L5 3L15 6L13 15Z" fill="none" stroke="#2A4A70"/><rect x="1" y="13" width="4" height="4" fill="#fff" stroke="#223"/><rect x="3" y="1" width="4" height="4" fill="#fff" stroke="#223"/><rect x="13" y="4" width="4" height="4" fill="#fff" stroke="#223"/><rect x="11" y="13" width="4" height="4" fill="#fff" stroke="#223"/></svg>
<svg class="a" style="left:511px;top:728px" width="17" height="18" viewBox="0 0 17 18"><path d="M2 16L11 7" stroke="#6A7A90" stroke-width="1.5"/><path d="M9 5L13 1L16 4L12 8Z" fill="#F0B030" stroke="#805000"/></svg>
<div class="a" style="left:535px;top:730px;width:1px;height:14px;background:#C9CACC"></div>
<svg class="a" style="left:542px;top:728px" width="18" height="18" viewBox="0 0 18 18"><rect x="1" y="3" width="16" height="14" fill="#F8E8C0" stroke="#8A5A10" stroke-width="1.5"/><text x="5" y="14" font-size="9" font-weight="bold" font-family="Liberation Sans" fill="#1A3A70">A</text><path d="M6 3L9 0L12 3" stroke="#8A5A10" fill="none"/></svg>
<svg class="a" style="left:567px;top:727px" width="18" height="19" viewBox="0 0 18 19"><rect x="1" y="6" width="10" height="10" fill="#E85A10" stroke="#8A3A10"/><circle cx="12" cy="6" r="5" fill="#F8B030" stroke="#A07010"/><path d="M7 17L12 8L17 17Z" fill="#4A8AD8" stroke="#1A4A9A"/></svg>
<svg class="a" style="left:592px;top:728px" width="18" height="18" viewBox="0 0 18 18"><rect x="1" y="3" width="16" height="14" fill="#F0C870" stroke="#8A5A10" stroke-width="1.5"/><rect x="4" y="6" width="10" height="8" fill="#5AB040"/><rect x="4" y="6" width="10" height="4" fill="#7AC0F0"/><path d="M6 3L9 0L12 3" stroke="#8A5A10" fill="none"/></svg>
<div class="a" style="left:618px;top:730px;width:1px;height:14px;background:#C9CACC"></div>
<svg class="a" style="left:626px;top:728px" width="17" height="17" viewBox="0 0 17 17"><path d="M14 6A6 6 0 1 0 12 13" stroke="#4A7AB8" stroke-width="3.5" fill="none"/><path d="M14 6A6 6 0 1 0 12 13" stroke="#A8C8F0" stroke-width="1.5" fill="none"/><circle cx="8.5" cy="9" r="2" fill="#4A7AB8"/></svg>
<svg class="a" style="left:650px;top:728px" width="18" height="18" viewBox="0 0 18 18"><rect x="1" y="1" width="1.5" height="16" fill="#3A9A30"/><rect x="4" y="5" width="6" height="7" fill="#5AA0F0" stroke="#1A4A9A"/><path d="M17 8H11M13 5L10 8L13 11" stroke="#E03030" stroke-width="1.8" fill="none"/><rect x="1" y="1" width="16" height="16" fill="none" stroke="#9AAAC0" stroke-width="0.8"/></svg>
<svg class="a" style="left:673px;top:735px" width="8" height="5" viewBox="0 0 8 5"><path d="M0.5 0.5H7.5L4 4.5Z" fill="#111"/></svg>
<svg class="a" style="left:685px;top:728px" width="18" height="18" viewBox="0 0 18 18"><rect x="1" y="7" width="10" height="10" fill="#2A5AA0" stroke="#123"/><rect x="6" y="2" width="11" height="11" fill="#F8C830" stroke="#805000"/></svg>
<svg class="a" style="left:709px;top:735px" width="8" height="5" viewBox="0 0 8 5"><path d="M0.5 0.5H7.5L4 4.5Z" fill="#111"/></svg>
<div class="a" style="left:723px;top:730px;width:1px;height:14px;background:#C9CACC"></div>
<svg class="a" style="left:729px;top:728px" width="18" height="18" viewBox="0 0 18 18"><rect x="1" y="3" width="8" height="8" fill="#E85A20" stroke="#8A3A10"/><path d="M8 8H16V16H8Z" fill="#3A80E0" stroke="#1A4A9A"/><path d="M8 8L11 5H17V13L16 16" fill="#8AC0F8" stroke="#1A4A9A"/></svg>
<svg class="a" style="left:755px;top:728px" width="18" height="18" viewBox="0 0 18 18"><path d="M2 6H7M4.5 3.5V8.5M2 3.5L7 8.5M7 3.5L2 8.5" stroke="#F08030" stroke-width="1.4"/><rect x="9" y="2" width="8" height="7" fill="#A8D0F8" stroke="#3A70B0"/><path d="M9 9V17L11 15L13 18L14 17L12.5 14H15Z" fill="#fff" stroke="#111"/></svg>
<div class="a" style="left:786px;top:723px;width:10px;height:28px;background:linear-gradient(#F2F2F2,#A8A8A8)"></div>
<svg class="a" style="left:787px;top:744px" width="8" height="5" viewBox="0 0 8 5"><path d="M0.5 0.5H7.5L4 4.5Z" fill="#111"/></svg>
<div class="a" style="left:8px;top:753px;width:1167px;height:22px;background:#F0F0F0"></div>
<div class="t" style="left:19px;top:760px;font-size:11.5px;color:#111">Shape 'AutoShape 3' selected</div>
<div class="a" style="left:420px;top:756px;width:1px;height:16px;background:#A0A0A0"></div>
<div class="a" style="left:641px;top:756px;width:1px;height:16px;background:#A0A0A0"></div>
<div class="a" style="left:657px;top:756px;width:1px;height:16px;background:#A0A0A0"></div>
<div class="a" style="left:685px;top:756px;width:1px;height:16px;background:#A0A0A0"></div>
<div class="a" style="left:757px;top:756px;width:1px;height:16px;background:#A0A0A0"></div>
<div class="a" style="left:995px;top:756px;width:1px;height:16px;background:#A0A0A0"></div>
<div class="a" style="left:1138px;top:756px;width:1px;height:16px;background:#A0A0A0"></div>
<svg class="a" style="left:428px;top:757px" width="14" height="12" viewBox="0 0 14 12"><path d="M3 0V8M0 3.5H13" stroke="#1A3AD8" stroke-width="1"/><path d="M5 11.5H14M13.5 4V12" stroke="#222" stroke-dasharray="1 1" fill="none"/></svg>
<div class="t" style="left:449px;top:760px;font-size:11.5px;color:#111">6.69 / 5.51</div>
<svg class="a" style="left:535px;top:757px" width="14" height="13" viewBox="0 0 14 13"><rect x="4.5" y="2.5" width="8" height="9" fill="none" stroke="#222" stroke-dasharray="1 1"/><path d="M1 7V12" stroke="#222" stroke-width="1"/><path d="M6 0L7 1.5L8 0M10 0L11 1.5L12 0" stroke="#222" fill="none" stroke-width="0.8"/></svg>
<div class="t" style="left:556px;top:760px;font-size:11.5px;color:#111">1.78 x 1.67</div>
<div class="t" style="left:646px;top:759px;font-size:12px;color:#333">*</div>
<div class="t" style="left:689px;top:760px;font-size:11.5px;color:#111">Slide 11 / 46</div>
<div class="t" style="left:762px;top:760px;font-size:11.5px;color:#111">Title2</div>
<svg class="a" style="left:1001px;top:759px" width="12" height="12" viewBox="0 0 12 12"><circle cx="6" cy="6" r="5.3" fill="#C8DCF0" stroke="#3A5A80"/><path d="M3 6H9" stroke="#1A3A60" stroke-width="1.4"/></svg>
<div class="a" style="left:1017px;top:764px;width:97px;height:1px;background:#555"></div>
<div class="a" style="left:1064px;top:761px;width:1px;height:7px;background:#555"></div>
<svg class="a" style="left:1031px;top:759px" width="12" height="12" viewBox="0 0 12 12"><circle cx="5.5" cy="5.8" r="4.3" fill="#7AA4CC" stroke="#2A4A70"/></svg>
<svg class="a" style="left:1119px;top:759px" width="12" height="12" viewBox="0 0 12 12"><circle cx="6" cy="6" r="5.3" fill="#C8DCF0" stroke="#3A5A80"/><path d="M3 6H9M6 3V9" stroke="#1A3A60" stroke-width="1.4"/></svg>
<div class="t" style="left:1143px;top:760px;font-size:11.5px;color:#111">46%</div>
<div class="t" style="left:4px;top:-2px;font-family:'Liberation Serif',serif;font-size:31px;color:rgba(160,215,255,.55);text-shadow:2px 2px 0 rgba(20,70,140,.3);-webkit-text-stroke:0.4px rgba(160,215,255,.55);">programy.net<span style="color:rgba(110,190,255,.55);text-shadow:2px 2px 0 rgba(20,70,140,.3);-webkit-text-stroke:0.4px rgba(110,190,255,.55)">.pl</span></div>
<div class="t" style="left:494px;top:373px;font-family:'Liberation Serif',serif;font-size:31px;color:rgba(190,190,190,.45);text-shadow:2px 2px 0 rgba(90,90,90,.3);-webkit-text-stroke:0.4px rgba(190,190,190,.45);">programy.net<span style="color:rgba(150,195,240,.5);text-shadow:2px 2px 0 rgba(90,90,90,.3);-webkit-text-stroke:0.4px rgba(150,195,240,.5)">.pl</span></div>
<div class="t" style="left:986px;top:748px;font-family:'Liberation Serif',serif;font-size:30px;color:rgba(190,190,190,.4);text-shadow:2px 2px 0 rgba(90,90,90,.22);-webkit-text-stroke:0.4px rgba(190,190,190,.4);">programy.net<span style="color:rgba(120,180,240,.45);text-shadow:2px 2px 0 rgba(90,90,90,.22);-webkit-text-stroke:0.4px rgba(120,180,240,.45)">.pl</span></div>
<svg class="a" style="left:12px;top:6px" width="15" height="17" viewBox="0 0 15 17"><path d="M1.5 1.5H10L13.5 5V15.5H1.5Z" fill="#fff" stroke="#2A3340"/><rect x="1" y="1" width="2" height="15" fill="#1A2A40"/><rect x="4.5" y="8.5" width="7" height="5" fill="#fff" stroke="#F06A10" stroke-width="2"/><path d="M0 6Q5 2 13 4M1 8Q6 4 13 6" stroke="#8A949E" fill="none" stroke-width="1"/></svg>
</body></html>
